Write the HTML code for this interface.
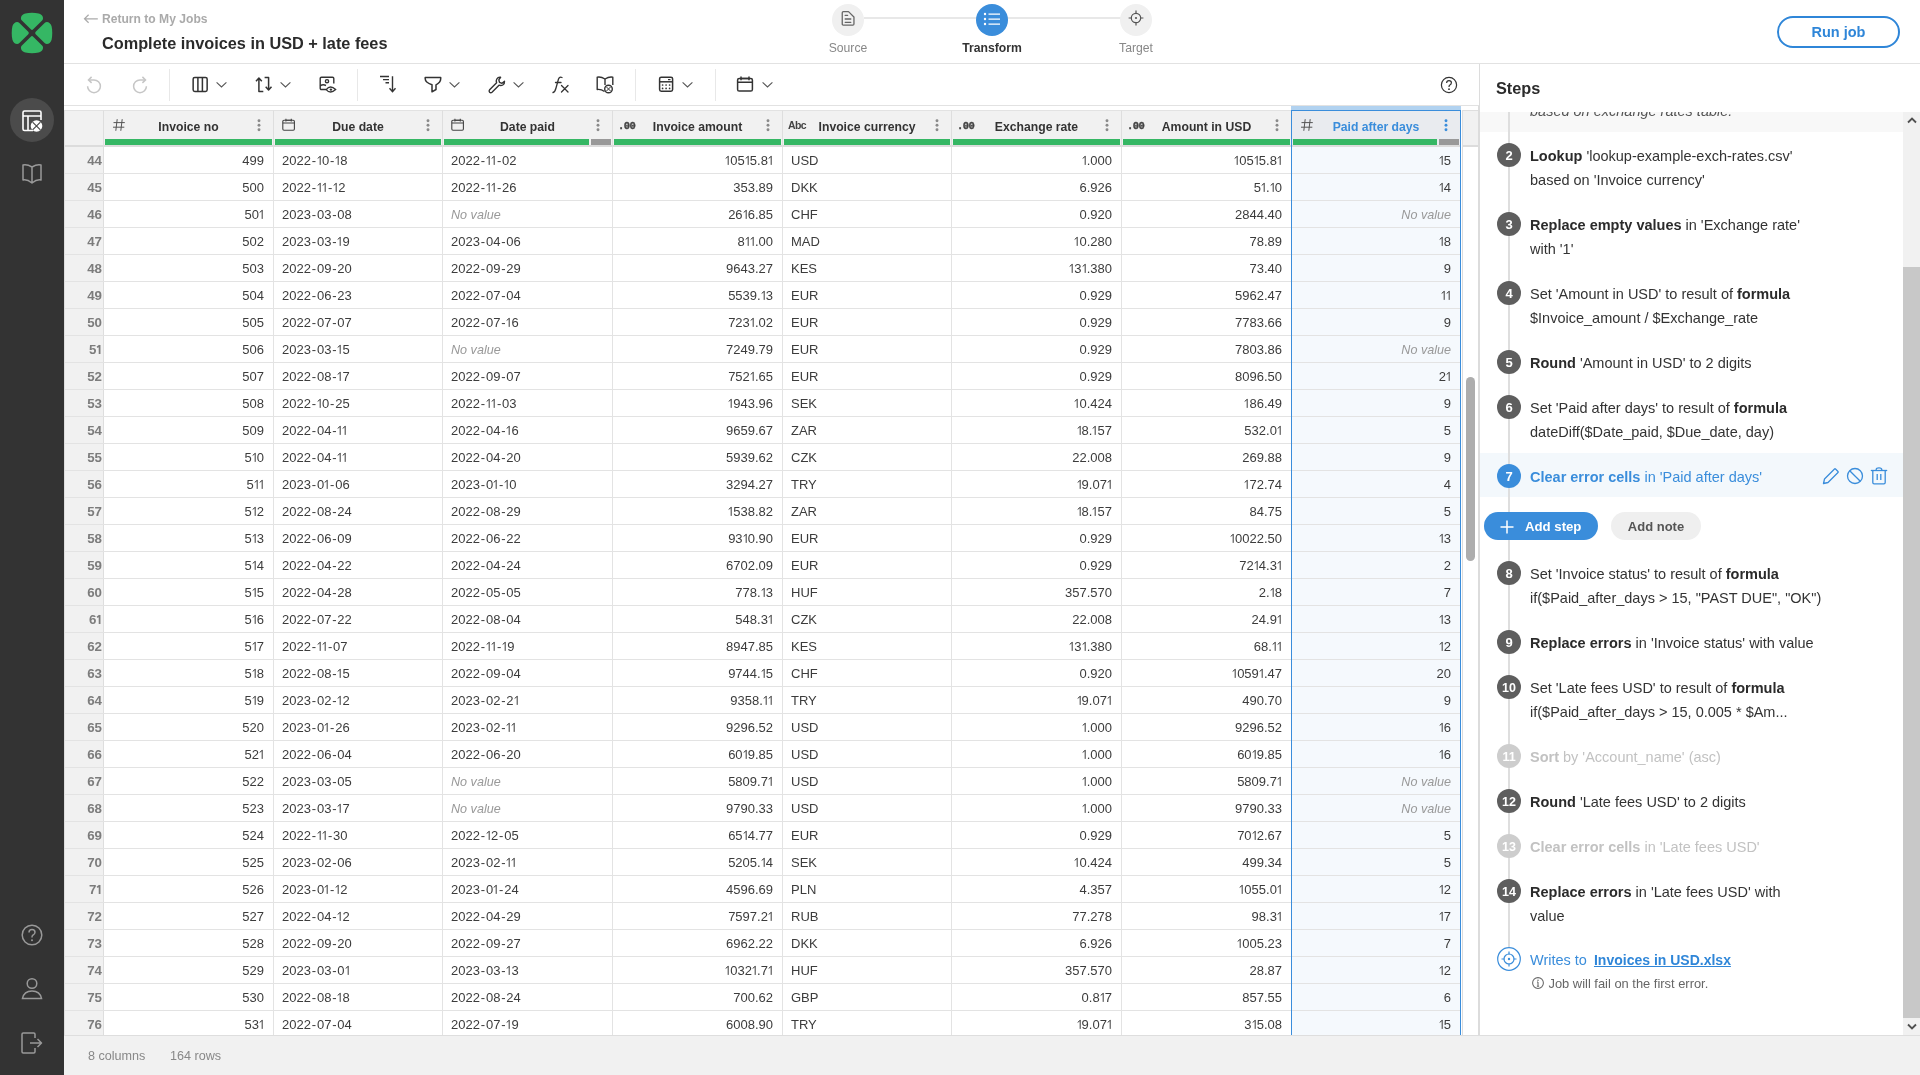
<!DOCTYPE html><html><head><meta charset="utf-8"><style>
*{box-sizing:border-box;margin:0;padding:0}
html,body{width:1920px;height:1075px;overflow:hidden;background:#fff}
body{position:relative;font-family:"Liberation Sans",sans-serif;color:#333;-webkit-font-smoothing:antialiased}
#root{position:absolute;left:0;top:0;width:1920px;height:1075px;will-change:transform}
.abs{position:absolute}
svg{display:block;overflow:visible}
#sb{left:0;top:0;width:64px;height:1075px;background:#333333}
#hdr{left:64px;top:0;width:1856px;height:64px;border-bottom:1px solid #e2e2e2;background:#fff}
#tb{left:64px;top:64px;width:1415px;height:42px;border-bottom:1px solid #e2e2e2;background:#fff}
#foot{left:64px;top:1035px;width:1856px;height:40px;background:#f1f1f1;border-top:1px solid #dedede}
#panel{left:1479px;top:64px;width:441px;height:971px;border-left:1px solid #dcdcdc;background:#fff}
.hc{position:absolute;top:110px;height:37px;background:#f1f1f1;border-right:1px solid #dedede;border-bottom:2px solid #dcdcdc;border-top:1px solid #e2e2e2}
.ht{position:absolute;top:0;left:0;right:0;height:29px;line-height:33px;text-align:center;font-weight:bold;font-size:12.2px;color:#333}
.hi{position:absolute;left:8px;top:6.8px;width:14px;height:14px}
.hk{position:absolute;right:11px;top:7.5px;width:6px;height:14px}
.gbar{position:absolute;top:28px;height:6px;background:#35b764}
.gray{position:absolute;top:28px;height:6px;background:#999}
.row{position:absolute;left:64px;width:1397px;height:27px;border-bottom:1px solid #e3e3e3}
.c{position:absolute;top:0;height:26px;line-height:27px;font-size:13px;color:#3c3c3c;white-space:nowrap;border-right:1px solid #e3e3e3;overflow:hidden}
.r{text-align:right;padding-right:9px}
.l{text-align:left;padding-left:8px}
.rn{position:absolute;left:0;top:0;width:40px;height:26px;line-height:27px;background:#f1f1f1;border-right:1px solid #dedede;text-align:right;padding-right:1px;font-weight:bold;color:#7c7c7c;font-size:13.3px}
.nv{font-style:italic;color:#999;font-size:12.6px}
i.o{font-style:normal;margin-left:-1px;letter-spacing:-1.1px}
i.oe{font-style:normal;margin-left:-2.1px}
svg.one{display:inline-block;vertical-align:baseline}
i.h{font-style:normal;margin-left:0.8px;letter-spacing:0.85px}
.tdec{display:block;-webkit-text-stroke:0.35px #444;font-family:"Liberation Mono",monospace;font-weight:bold;font-size:10.5px;line-height:14px;color:#444;letter-spacing:-0.6px;margin-left:-3px;margin-top:1.2px}
.st{font-size:14.5px;line-height:24px;white-space:nowrap;color:#333}
.st b{font-weight:bold}
.circ{width:24px;height:24px;border-radius:50%;color:#fff;font-weight:bold;text-align:center;line-height:24px}
.tabc{display:block;font-weight:bold;font-size:10.5px;line-height:14px;color:#444;letter-spacing:-0.6px;margin-top:0.7px;margin-left:-3px}
</style></head><body><div id="root">

<div id="sb" class="abs"></div>
<div class="abs" style="left:0px;top:0px;width:64px;height:64px;"><svg width="64" height="64" viewBox="0 0 64 64" ><g fill="#35b764"><path d="M30.8 29.3 L21.9 20.4 C19.8 18.3 21.3 14.4 25.3 13.4 C29.5 12.5 34.5 12.5 38.7 13.4 C42.7 14.4 44.2 18.3 42.1 20.4 L33.2 29.3 Q32 30.5 30.8 29.3 Z"/><g transform="rotate(90 32 33)"><path d="M30.8 29.3 L21.9 20.4 C19.8 18.3 21.3 14.4 25.3 13.4 C29.5 12.5 34.5 12.5 38.7 13.4 C42.7 14.4 44.2 18.3 42.1 20.4 L33.2 29.3 Q32 30.5 30.8 29.3 Z"/></g><g transform="rotate(180 32 33)"><path d="M30.8 29.3 L21.9 20.4 C19.8 18.3 21.3 14.4 25.3 13.4 C29.5 12.5 34.5 12.5 38.7 13.4 C42.7 14.4 44.2 18.3 42.1 20.4 L33.2 29.3 Q32 30.5 30.8 29.3 Z"/></g><g transform="rotate(270 32 33)"><path d="M30.8 29.3 L21.9 20.4 C19.8 18.3 21.3 14.4 25.3 13.4 C29.5 12.5 34.5 12.5 38.7 13.4 C42.7 14.4 44.2 18.3 42.1 20.4 L33.2 29.3 Q32 30.5 30.8 29.3 Z"/></g></g></svg></div>
<div class="abs" style="left:10px;top:98px;width:44px;height:44px;background:#4b4b4b;border-radius:50%"></div>
<div class="abs" style="left:22px;top:110px;width:20px;height:22px;"><svg width="20" height="22" viewBox="0 0 20 22" ><g stroke="#fff" stroke-width="1.6" fill="none"><path d="M11 20.5 H2.5 Q1 20.5 1 19 V2.5 Q1 1 2.5 1 H17.5 Q19 1 19 2.5 V10"/><path d="M1 6 H19 M6 6 V20.5"/></g>
<circle cx="14.5" cy="16" r="5.8" fill="#fff"/><g stroke="#4b4b4b" stroke-width="1.2"><path d="M10.6 12.1 L18.4 19.9 M18.4 12.1 L10.6 19.9"/></g></svg></div>
<div class="abs" style="left:22px;top:163px;width:20px;height:22px;"><svg width="20" height="22" viewBox="0 0 20 22" ><g stroke="#999" stroke-width="1.5" fill="none" stroke-linejoin="round"><path d="M10 4 Q5 1 1 2 V17 Q5 16 10 20 Q15 16 19 17 V2 Q15 1 10 4 Z M10 4 V20"/></g></svg></div>
<div class="abs" style="left:21px;top:924px;width:22px;height:22px;"><svg width="22" height="22" viewBox="0 0 22 22" ><g stroke="#999" stroke-width="1.5" fill="none"><circle cx="11" cy="11" r="9.8"/><path d="M8 8.5 Q8 5.5 11 5.5 Q14 5.5 14 8.3 Q14 10.3 11.5 11.5 Q11 12 11 13.5"/></g><circle cx="11" cy="16.3" r="1" fill="#999"/></svg></div>
<div class="abs" style="left:21px;top:978px;width:22px;height:22px;"><svg width="22" height="22" viewBox="0 0 22 22" ><g stroke="#999" stroke-width="1.5" fill="none"><circle cx="11" cy="5.5" r="4.8"/><path d="M1.5 20.5 Q3 13 11 13 Q19 13 20.5 20.5 Z"/></g></svg></div>
<div class="abs" style="left:21px;top:1032px;width:22px;height:22px;"><svg width="22" height="22" viewBox="0 0 22 22" ><g stroke="#999" stroke-width="1.5" fill="none" stroke-linejoin="round"><path d="M14 6 V2.2 Q14 1 12.8 1 H2.2 Q1 1 1 2.2 V19.8 Q1 21 2.2 21 H12.8 Q14 21 14 19.8 V16"/><path d="M9 11 H20.5 M16.5 7 L20.5 11 L16.5 15"/></g></svg></div>
<div id="hdr" class="abs"></div>
<div class="abs" style="left:83px;top:13px;width:16px;height:12px;"><svg width="16" height="12" viewBox="0 0 16 12" ><g stroke="#aaa" stroke-width="1.2" fill="none"><path d="M14.8 5.8 H1.5 M5.6 1.8 L1.5 5.8 L5.6 9.8"/></g></svg></div>
<div class="abs" style="left:102px;top:10.7px;font-size:12.1px;font-weight:bold;color:#aaa;line-height:17px;white-space:nowrap">Return to My Jobs</div>
<div class="abs" style="left:102px;top:33px;font-size:16.3px;font-weight:bold;color:#2b2b2b;line-height:20px;white-space:nowrap">Complete invoices in USD + late fees</div>
<div class="abs" style="left:864px;top:17px;width:272px;height:2px;background:#e8e8e8"></div>
<div class="abs" style="left:832px;top:4px;width:32px;height:32px;background:#f0f0f0;border-radius:50%"></div>
<div class="abs" style="left:976px;top:4px;width:32px;height:32px;background:#3a8ddb;border-radius:50%"></div>
<div class="abs" style="left:1120px;top:4px;width:32px;height:32px;background:#f0f0f0;border-radius:50%"></div>
<div class="abs" style="left:840px;top:10px;width:16px;height:18px;"><svg width="16" height="18" viewBox="0 0 16 18" ><g stroke="#666" stroke-width="1.3" fill="none" stroke-linejoin="round" stroke-linecap="round"><path d="M2.25 2.8 Q2.25 1.65 3.4 1.65 H8.5 L13.95 7 V13.9 Q13.95 15.05 12.8 15.05 H3.4 Q2.25 15.05 2.25 13.9 Z"/><path d="M5.2 5.4 H7.6 M5.2 9 H10.8 M5.2 12.3 H10.8"/></g></svg></div>
<div class="abs" style="left:983px;top:11.5px;width:18px;height:14px;"><svg width="18" height="14" viewBox="0 0 18 14" ><g fill="#fff"><circle cx="2" cy="2" r="1.2"/><circle cx="2" cy="7" r="1.2"/><circle cx="2" cy="12" r="1.2"/></g><g stroke="#fff" stroke-width="1.25"><path d="M5.5 2 H17 M5.5 7 H17 M5.5 12 H17"/></g></svg></div>
<div class="abs" style="left:1127px;top:9.4px;width:18px;height:18px;"><svg width="18" height="18" viewBox="0 0 18 18" ><g stroke="#555" stroke-width="1.2" fill="none"><circle cx="9" cy="9" r="4.7"/><path d="M9 1.6 V4.3 M9 13.7 V16.4 M1.6 9 H4.3 M13.7 9 H16.4"/></g><circle cx="9" cy="9" r="1.1" fill="#555"/></svg></div>
<div class="abs" style="left:808px;top:40px;width:80px;text-align:center;font-size:12.2px;color:#888;line-height:16px">Source</div>
<div class="abs" style="left:942px;top:40px;width:100px;text-align:center;font-size:12.2px;font-weight:bold;color:#333;line-height:16px">Transform</div>
<div class="abs" style="left:1096px;top:40px;width:80px;text-align:center;font-size:12.2px;color:#888;line-height:16px">Target</div>
<div class="abs" style="left:1777px;top:16px;width:123px;height:32px;border:2px solid #2f86d8;border-radius:16px;text-align:center;line-height:28px;font-size:14.5px;font-weight:bold;color:#2f86d8">Run job</div>
<div id="tb" class="abs"></div>
<div class="abs" style="left:85px;top:77px;width:18px;height:18px;"><svg width="18" height="18" viewBox="0 0 18 18" ><g stroke="#c6c6c6" stroke-width="1.5" fill="none"><path d="M2.6 9.3 A6.4 6.4 0 1 0 9 2.9 H3.6"/><path d="M6.6 -0.1 L3.5 2.9 L6.6 5.9"/></g></svg></div>
<div class="abs" style="left:130.5px;top:77px;width:18px;height:18px;"><svg width="18" height="18" viewBox="0 0 18 18" ><g transform="translate(18,0) scale(-1,1)" stroke="#c6c6c6" stroke-width="1.5" fill="none"><path d="M2.6 9.3 A6.4 6.4 0 1 0 9 2.9 H3.6"/><path d="M6.6 -0.1 L3.5 2.9 L6.6 5.9"/></g></svg></div>
<div class="abs" style="left:169px;top:69px;width:1px;height:32px;background:#e8e8e8"></div>
<div class="abs" style="left:357px;top:69px;width:1px;height:32px;background:#e8e8e8"></div>
<div class="abs" style="left:635px;top:69px;width:1px;height:32px;background:#e8e8e8"></div>
<div class="abs" style="left:715px;top:69px;width:1px;height:32px;background:#e8e8e8"></div>
<div class="abs" style="left:191px;top:75.5px;width:18px;height:18px;"><svg width="18" height="18" viewBox="0 0 18 18" ><g stroke="#333" stroke-width="1.5" fill="none"><rect x="2.15" y="1.45" width="14" height="14" rx="1.6"/><path d="M6.9 1.45 V15.45 M11.4 1.45 V15.45"/></g></svg></div>
<div class="abs" style="left:216.0px;top:82px;width:11px;height:6px;"><svg width="11" height="6" viewBox="0 0 11 6" ><path d="M0.6 0.4 L5.5 5 L10.4 0.4" stroke="#555" stroke-width="1.1" fill="none"/></svg></div>
<div class="abs" style="left:254.5px;top:75.5px;width:18px;height:18px;"><svg width="18" height="18" viewBox="0 0 18 18" ><g stroke="#333" stroke-width="1.5" fill="none" stroke-linejoin="round"><path d="M8.3 15.45 H3.9 V2.2 M1 5.2 L3.9 2 L6.8 5.2"/><path d="M9.6 1.45 H13.6 V14 M10.7 10.8 L13.6 14 L16.5 10.8"/></g></svg></div>
<div class="abs" style="left:279.5px;top:82px;width:11px;height:6px;"><svg width="11" height="6" viewBox="0 0 11 6" ><path d="M0.6 0.4 L5.5 5 L10.4 0.4" stroke="#555" stroke-width="1.1" fill="none"/></svg></div>
<div class="abs" style="left:318.5px;top:76px;width:18px;height:18px;"><svg width="18" height="18" viewBox="0 0 18 18" ><g stroke="#333" stroke-width="1.4" fill="none"><path d="M7 13.5 H2.5 Q1.2 13.5 1.2 12.2 V2.5 Q1.2 1.2 2.5 1.2 H13.5 Q14.8 1.2 14.8 2.5 V7.5"/><circle cx="8" cy="5.2" r="1.6"/><path d="M1.2 9.8 Q4 8 7 9.5"/><path d="M7.2 13.6 Q11.3 8.5 16.6 13.6 Q11.3 18.5 7.2 13.6 Z"/></g><circle cx="11.9" cy="13.6" r="1.2" fill="#333"/></svg></div>
<div class="abs" style="left:378.5px;top:75.3px;width:18px;height:18px;"><svg width="18" height="18" viewBox="0 0 18 18" ><g stroke="#333" stroke-width="1.4" fill="none"><path d="M1 1.5 H10 M4 4.6 H10 M6.5 7.7 H10"/><path d="M13.5 1.2 V16.5 M10.5 13.3 L13.5 16.6 L16.5 13.3"/></g></svg></div>
<div class="abs" style="left:424px;top:75.5px;width:18px;height:18px;"><svg width="18" height="18" viewBox="0 0 18 18" ><g stroke="#333" stroke-width="1.5" fill="none" stroke-linejoin="round"><path d="M1.2 1.5 H16.7 V2.8 Q16.7 6.5 12 8.8 V13.5 L8 15.8 V8.8 Q1.2 6.5 1.2 2.8 Z"/></g></svg></div>
<div class="abs" style="left:449.0px;top:82px;width:11px;height:6px;"><svg width="11" height="6" viewBox="0 0 11 6" ><path d="M0.6 0.4 L5.5 5 L10.4 0.4" stroke="#555" stroke-width="1.1" fill="none"/></svg></div>
<div class="abs" style="left:487.5px;top:75.5px;width:18px;height:18px;"><svg width="18" height="18" viewBox="0 0 18 18" ><g stroke="#333" stroke-width="1.4" fill="none" stroke-linejoin="round"><path d="M12.6 1.3 Q10 1 8.8 3 Q7.8 4.8 8.6 6.8 L1.6 13.8 Q0.6 15 1.6 16.2 Q2.8 17.2 4 16.2 L11 9.2 Q13 10 14.8 9 Q16.8 7.8 16.5 5.2 L14 7.3 L11.5 6.3 L10.8 3.8 Z"/></g></svg></div>
<div class="abs" style="left:512.5px;top:82px;width:11px;height:6px;"><svg width="11" height="6" viewBox="0 0 11 6" ><path d="M0.6 0.4 L5.5 5 L10.4 0.4" stroke="#555" stroke-width="1.1" fill="none"/></svg></div>
<div class="abs" style="left:551.5px;top:76px;width:18px;height:18px;"><svg width="18" height="18" viewBox="0 0 18 18" ><g stroke="#333" stroke-width="1.3" fill="none" stroke-linecap="round"><path d="M1 16.5 Q3 16 4 12 L6.5 3 Q7.5 0.5 10 1.5"/><path d="M3.5 6.5 H9"/><path d="M9.5 9.5 L16 16 M16 9.5 L9.5 16"/></g></svg></div>
<div class="abs" style="left:596px;top:76px;width:18px;height:18px;"><svg width="18" height="18" viewBox="0 0 18 18" ><g stroke="#333" stroke-width="1.4" fill="none" stroke-linejoin="round"><path d="M9 3 Q5 0.5 1.2 1.2 V13.5 Q5 13 8.5 15.5"/><path d="M9 3 Q13 0.5 16.8 1.2 V9"/><path d="M9 3 V9"/><circle cx="12.5" cy="13" r="3.8"/><path d="M10.5 11 L14.5 15 M14.5 11 L10.5 15" stroke-width="1"/></g></svg></div>
<div class="abs" style="left:657px;top:75.5px;width:18px;height:18px;"><svg width="18" height="18" viewBox="0 0 18 18" ><g stroke="#333" stroke-width="1.5" fill="none"><rect x="2.6" y="1.2" width="13" height="14" rx="1.6"/><path d="M2.6 5.8 H15.6"/></g><g fill="#333"><rect x="11" y="3" width="2.5" height="1.2"/><circle cx="5.6" cy="9" r="0.85"/><circle cx="9.1" cy="9" r="0.85"/><circle cx="12.6" cy="9" r="0.85"/><circle cx="5.6" cy="12.4" r="0.85"/><circle cx="9.1" cy="12.4" r="0.85"/><circle cx="12.6" cy="12.4" r="0.85"/></g></svg></div>
<div class="abs" style="left:682.0px;top:82px;width:11px;height:6px;"><svg width="11" height="6" viewBox="0 0 11 6" ><path d="M0.6 0.4 L5.5 5 L10.4 0.4" stroke="#555" stroke-width="1.1" fill="none"/></svg></div>
<div class="abs" style="left:736px;top:75.5px;width:18px;height:18px;"><svg width="18" height="18" viewBox="0 0 18 18" ><g stroke="#333" stroke-width="1.5" fill="none"><rect x="1.6" y="2.4" width="14.8" height="12.6" rx="1.6"/><path d="M1.6 6.2 H16.4 M5 0.6 V4.2 M13 0.6 V4.2 M5 2.4 H13"/></g></svg></div>
<div class="abs" style="left:761.5px;top:82px;width:11px;height:6px;"><svg width="11" height="6" viewBox="0 0 11 6" ><path d="M0.6 0.4 L5.5 5 L10.4 0.4" stroke="#555" stroke-width="1.1" fill="none"/></svg></div>
<div class="abs" style="left:1440px;top:76px;width:18px;height:18px;"><svg width="18" height="18" viewBox="0 0 18 18" ><g stroke="#333" stroke-width="1.2" fill="none"><circle cx="9" cy="9" r="7.6"/><path d="M6.6 7 Q6.6 4.6 9 4.6 Q11.4 4.6 11.4 6.8 Q11.4 8.3 9.6 9.2 Q9 9.6 9 11"/></g><circle cx="9" cy="13.2" r="0.9" fill="#333"/></svg></div>
<div class="hc" style="left:104px;width:170px;background:#f1f1f1"><div class="hi"><svg width="14" height="14" viewBox="0 0 14 14"><g stroke="#555" stroke-width="1" fill="none"><path d="M5.2 1.2 L3.8 12.8 M10.2 1.2 L8.8 12.8 M1.5 4.6 H12.8 M1 9.2 H12.3"/></g></svg></div><div class="ht" style="color:#333">Invoice no</div><div class="hk"><svg width="6" height="14" viewBox="0 0 6 14"><g fill="#8a8a8a"><circle cx="3" cy="1.8" r="1.45"/><circle cx="3" cy="6.3" r="1.45"/><circle cx="3" cy="10.8" r="1.45"/></g></svg></div><div class="gbar" style="left:1px;width:167px"></div></div>
<div class="hc" style="left:274px;width:169px;background:#f1f1f1"><div class="hi"><svg width="14" height="14" viewBox="0 0 14 14"><g stroke="#444" stroke-width="1.1" fill="none"><rect x="0.8" y="2.3" width="11.6" height="9.9" rx="1.2"/><path d="M0.8 5 H12.4 M3.9 0.8 V3.6 M9.3 0.8 V3.6 M3.9 2.3 H9.3"/></g></svg></div><div class="ht" style="color:#333">Due date</div><div class="hk"><svg width="6" height="14" viewBox="0 0 6 14"><g fill="#8a8a8a"><circle cx="3" cy="1.8" r="1.45"/><circle cx="3" cy="6.3" r="1.45"/><circle cx="3" cy="10.8" r="1.45"/></g></svg></div><div class="gbar" style="left:1px;width:166px"></div></div>
<div class="hc" style="left:443px;width:170px;background:#f1f1f1"><div class="hi"><svg width="14" height="14" viewBox="0 0 14 14"><g stroke="#444" stroke-width="1.1" fill="none"><rect x="0.8" y="2.3" width="11.6" height="9.9" rx="1.2"/><path d="M0.8 5 H12.4 M3.9 0.8 V3.6 M9.3 0.8 V3.6 M3.9 2.3 H9.3"/></g></svg></div><div class="ht" style="color:#333">Date paid</div><div class="hk"><svg width="6" height="14" viewBox="0 0 6 14"><g fill="#8a8a8a"><circle cx="3" cy="1.8" r="1.45"/><circle cx="3" cy="6.3" r="1.45"/><circle cx="3" cy="10.8" r="1.45"/></g></svg></div><div class="gbar" style="left:1px;width:145px"></div><div class="gray" style="left:148px;width:20px"></div></div>
<div class="hc" style="left:613px;width:170px;background:#f1f1f1"><div class="hi"><span class="tdec">.00</span></div><div class="ht" style="color:#333">Invoice amount</div><div class="hk"><svg width="6" height="14" viewBox="0 0 6 14"><g fill="#8a8a8a"><circle cx="3" cy="1.8" r="1.45"/><circle cx="3" cy="6.3" r="1.45"/><circle cx="3" cy="10.8" r="1.45"/></g></svg></div><div class="gbar" style="left:1px;width:167px"></div></div>
<div class="hc" style="left:783px;width:169px;background:#f1f1f1"><div class="hi"><span class="tabc">Abc</span></div><div class="ht" style="color:#333">Invoice currency</div><div class="hk"><svg width="6" height="14" viewBox="0 0 6 14"><g fill="#8a8a8a"><circle cx="3" cy="1.8" r="1.45"/><circle cx="3" cy="6.3" r="1.45"/><circle cx="3" cy="10.8" r="1.45"/></g></svg></div><div class="gbar" style="left:1px;width:166px"></div></div>
<div class="hc" style="left:952px;width:170px;background:#f1f1f1"><div class="hi"><span class="tdec">.00</span></div><div class="ht" style="color:#333">Exchange rate</div><div class="hk"><svg width="6" height="14" viewBox="0 0 6 14"><g fill="#8a8a8a"><circle cx="3" cy="1.8" r="1.45"/><circle cx="3" cy="6.3" r="1.45"/><circle cx="3" cy="10.8" r="1.45"/></g></svg></div><div class="gbar" style="left:1px;width:167px"></div></div>
<div class="hc" style="left:1122px;width:170px;background:#f1f1f1"><div class="hi"><span class="tdec">.00</span></div><div class="ht" style="color:#333">Amount in USD</div><div class="hk"><svg width="6" height="14" viewBox="0 0 6 14"><g fill="#8a8a8a"><circle cx="3" cy="1.8" r="1.45"/><circle cx="3" cy="6.3" r="1.45"/><circle cx="3" cy="10.8" r="1.45"/></g></svg></div><div class="gbar" style="left:1px;width:167px"></div></div>
<div class="hc" style="left:1292px;width:169px;background:#e9ebef"><div class="hi"><svg width="14" height="14" viewBox="0 0 14 14"><g stroke="#555" stroke-width="1" fill="none"><path d="M5.2 1.2 L3.8 12.8 M10.2 1.2 L8.8 12.8 M1.5 4.6 H12.8 M1 9.2 H12.3"/></g></svg></div><div class="ht" style="color:#3a8ddb">Paid after days</div><div class="hk"><svg width="6" height="14" viewBox="0 0 6 14"><g fill="#3a8ddb"><circle cx="3" cy="1.8" r="1.45"/><circle cx="3" cy="6.3" r="1.45"/><circle cx="3" cy="10.8" r="1.45"/></g></svg></div><div class="gbar" style="left:1px;width:144px"></div><div class="gray" style="left:147px;width:20px"></div></div>
<div class="hc" style="left:64px;width:40px;top:110px"></div>
<div class="abs" style="left:64px;top:110px;width:1px;height:925px;background:#dedede;z-index:2"></div>
<div class="abs" style="left:1291px;top:106px;width:170px;height:4px;background:#b1d2f0"></div>
<div class="abs" style="left:1462px;top:110px;width:17px;height:37px;background:#f1f1f1;border:1px solid #dedede;border-bottom:2px solid #dcdcdc"></div>
<div class="abs" style="left:1462px;top:147px;width:1px;height:888px;background:#dcdcdc"></div>
<div class="abs" style="left:1478px;top:106px;width:1px;height:929px;background:#dcdcdc"></div>
<div class="abs" style="left:1466px;top:377px;width:9px;height:184px;border-radius:4.5px;background:#adadad"></div>
<div class="row" style="top:147px"><div class="rn">44</div><div class="c r" style="left:40px;width:170px;">499</div><div class="c l" style="left:210px;width:169px;">2022<i class="h">-</i><svg class="one" width="5.1" height="9.4" viewBox="0 0 5.1 9.4"><path d="M3.2 0.0 V8.9 M3.2 0.4 L0.7000000000000002 2.4" stroke="#3c3c3c" stroke<i class="h">-</i>width="1.2" fill="none"/></svg>0<i class="h">-</i><svg class="one" width="5.1" height="9.4" viewBox="0 0 5.1 9.4"><path d="M3.2 0.0 V8.9 M3.2 0.4 L0.7000000000000002 2.4" stroke="#3c3c3c" stroke<i class="h">-</i>width="1.2" fill="none"/></svg>8</div><div class="c l" style="left:379px;width:170px;">2022<i class="h">-</i><svg class="one" width="5.1" height="9.4" viewBox="0 0 5.1 9.4"><path d="M3.2 0.0 V8.9 M3.2 0.4 L0.7000000000000002 2.4" stroke="#3c3c3c" stroke<i class="h">-</i>width="1.2" fill="none"/></svg><svg class="one" width="5.1" height="9.4" viewBox="0 0 5.1 9.4"><path d="M3.2 0.0 V8.9 M3.2 0.4 L0.7000000000000002 2.4" stroke="#3c3c3c" stroke<i class="h">-</i>width="1.2" fill="none"/></svg><i class="h">-</i>02</div><div class="c r" style="left:549px;width:170px;"><svg class="one" width="5.1" height="9.4" viewBox="0 0 5.1 9.4"><path d="M3.2 0.0 V8.9 M3.2 0.4 L0.7000000000000002 2.4" stroke="#3c3c3c" stroke<i class="h">-</i>width="1.2" fill="none"/></svg>05<svg class="one" width="5.1" height="9.4" viewBox="0 0 5.1 9.4"><path d="M3.2 0.0 V8.9 M3.2 0.4 L0.7000000000000002 2.4" stroke="#3c3c3c" stroke<i class="h">-</i>width="1.2" fill="none"/></svg>5.8<svg class="one" width="5.1" height="9.4" viewBox="0 0 5.1 9.4"><path d="M3.2 0.0 V8.9 M3.2 0.4 L0.7000000000000002 2.4" stroke="#3c3c3c" stroke<i class="h">-</i>width="1.2" fill="none"/></svg></div><div class="c l" style="left:719px;width:169px;">USD</div><div class="c r" style="left:888px;width:170px;"><svg class="one" width="5.1" height="9.4" viewBox="0 0 5.1 9.4"><path d="M3.2 0.0 V8.9 M3.2 0.4 L0.7000000000000002 2.4" stroke="#3c3c3c" stroke<i class="h">-</i>width="1.2" fill="none"/></svg>.000</div><div class="c r" style="left:1058px;width:170px;"><svg class="one" width="5.1" height="9.4" viewBox="0 0 5.1 9.4"><path d="M3.2 0.0 V8.9 M3.2 0.4 L0.7000000000000002 2.4" stroke="#3c3c3c" stroke<i class="h">-</i>width="1.2" fill="none"/></svg>05<svg class="one" width="5.1" height="9.4" viewBox="0 0 5.1 9.4"><path d="M3.2 0.0 V8.9 M3.2 0.4 L0.7000000000000002 2.4" stroke="#3c3c3c" stroke<i class="h">-</i>width="1.2" fill="none"/></svg>5.8<svg class="one" width="5.1" height="9.4" viewBox="0 0 5.1 9.4"><path d="M3.2 0.0 V8.9 M3.2 0.4 L0.7000000000000002 2.4" stroke="#3c3c3c" stroke<i class="h">-</i>width="1.2" fill="none"/></svg></div><div class="c r" style="left:1228px;width:169px;background:#f5f9fd;"><svg class="one" width="5.1" height="9.4" viewBox="0 0 5.1 9.4"><path d="M3.2 0.0 V8.9 M3.2 0.4 L0.7000000000000002 2.4" stroke="#3c3c3c" stroke<i class="h">-</i>width="1.2" fill="none"/></svg>5</div></div>
<div class="row" style="top:174px"><div class="rn">45</div><div class="c r" style="left:40px;width:170px;">500</div><div class="c l" style="left:210px;width:169px;">2022<i class="h">-</i><svg class="one" width="5.1" height="9.4" viewBox="0 0 5.1 9.4"><path d="M3.2 0.0 V8.9 M3.2 0.4 L0.7000000000000002 2.4" stroke="#3c3c3c" stroke<i class="h">-</i>width="1.2" fill="none"/></svg><svg class="one" width="5.1" height="9.4" viewBox="0 0 5.1 9.4"><path d="M3.2 0.0 V8.9 M3.2 0.4 L0.7000000000000002 2.4" stroke="#3c3c3c" stroke<i class="h">-</i>width="1.2" fill="none"/></svg><i class="h">-</i><svg class="one" width="5.1" height="9.4" viewBox="0 0 5.1 9.4"><path d="M3.2 0.0 V8.9 M3.2 0.4 L0.7000000000000002 2.4" stroke="#3c3c3c" stroke<i class="h">-</i>width="1.2" fill="none"/></svg>2</div><div class="c l" style="left:379px;width:170px;">2022<i class="h">-</i><svg class="one" width="5.1" height="9.4" viewBox="0 0 5.1 9.4"><path d="M3.2 0.0 V8.9 M3.2 0.4 L0.7000000000000002 2.4" stroke="#3c3c3c" stroke<i class="h">-</i>width="1.2" fill="none"/></svg><svg class="one" width="5.1" height="9.4" viewBox="0 0 5.1 9.4"><path d="M3.2 0.0 V8.9 M3.2 0.4 L0.7000000000000002 2.4" stroke="#3c3c3c" stroke<i class="h">-</i>width="1.2" fill="none"/></svg><i class="h">-</i>26</div><div class="c r" style="left:549px;width:170px;">353.89</div><div class="c l" style="left:719px;width:169px;">DKK</div><div class="c r" style="left:888px;width:170px;">6.926</div><div class="c r" style="left:1058px;width:170px;">5<svg class="one" width="5.1" height="9.4" viewBox="0 0 5.1 9.4"><path d="M3.2 0.0 V8.9 M3.2 0.4 L0.7000000000000002 2.4" stroke="#3c3c3c" stroke<i class="h">-</i>width="1.2" fill="none"/></svg>.<svg class="one" width="5.1" height="9.4" viewBox="0 0 5.1 9.4"><path d="M3.2 0.0 V8.9 M3.2 0.4 L0.7000000000000002 2.4" stroke="#3c3c3c" stroke<i class="h">-</i>width="1.2" fill="none"/></svg>0</div><div class="c r" style="left:1228px;width:169px;background:#f5f9fd;"><svg class="one" width="5.1" height="9.4" viewBox="0 0 5.1 9.4"><path d="M3.2 0.0 V8.9 M3.2 0.4 L0.7000000000000002 2.4" stroke="#3c3c3c" stroke<i class="h">-</i>width="1.2" fill="none"/></svg>4</div></div>
<div class="row" style="top:201px"><div class="rn">46</div><div class="c r" style="left:40px;width:170px;">50<svg class="one" width="5.1" height="9.4" viewBox="0 0 5.1 9.4"><path d="M3.2 0.0 V8.9 M3.2 0.4 L0.7000000000000002 2.4" stroke="#3c3c3c" stroke<i class="h">-</i>width="1.2" fill="none"/></svg></div><div class="c l" style="left:210px;width:169px;">2023<i class="h">-</i>03<i class="h">-</i>08</div><div class="c l" style="left:379px;width:170px;"><span class="nv">No value</span></div><div class="c r" style="left:549px;width:170px;">26<svg class="one" width="5.1" height="9.4" viewBox="0 0 5.1 9.4"><path d="M3.2 0.0 V8.9 M3.2 0.4 L0.7000000000000002 2.4" stroke="#3c3c3c" stroke<i class="h">-</i>width="1.2" fill="none"/></svg>6.85</div><div class="c l" style="left:719px;width:169px;">CHF</div><div class="c r" style="left:888px;width:170px;">0.920</div><div class="c r" style="left:1058px;width:170px;">2844.40</div><div class="c r" style="left:1228px;width:169px;background:#f5f9fd;"><span class="nv">No value</span></div></div>
<div class="row" style="top:228px"><div class="rn">47</div><div class="c r" style="left:40px;width:170px;">502</div><div class="c l" style="left:210px;width:169px;">2023<i class="h">-</i>03<i class="h">-</i><svg class="one" width="5.1" height="9.4" viewBox="0 0 5.1 9.4"><path d="M3.2 0.0 V8.9 M3.2 0.4 L0.7000000000000002 2.4" stroke="#3c3c3c" stroke<i class="h">-</i>width="1.2" fill="none"/></svg>9</div><div class="c l" style="left:379px;width:170px;">2023<i class="h">-</i>04<i class="h">-</i>06</div><div class="c r" style="left:549px;width:170px;">8<svg class="one" width="5.1" height="9.4" viewBox="0 0 5.1 9.4"><path d="M3.2 0.0 V8.9 M3.2 0.4 L0.7000000000000002 2.4" stroke="#3c3c3c" stroke<i class="h">-</i>width="1.2" fill="none"/></svg><svg class="one" width="5.1" height="9.4" viewBox="0 0 5.1 9.4"><path d="M3.2 0.0 V8.9 M3.2 0.4 L0.7000000000000002 2.4" stroke="#3c3c3c" stroke<i class="h">-</i>width="1.2" fill="none"/></svg>.00</div><div class="c l" style="left:719px;width:169px;">MAD</div><div class="c r" style="left:888px;width:170px;"><svg class="one" width="5.1" height="9.4" viewBox="0 0 5.1 9.4"><path d="M3.2 0.0 V8.9 M3.2 0.4 L0.7000000000000002 2.4" stroke="#3c3c3c" stroke<i class="h">-</i>width="1.2" fill="none"/></svg>0.280</div><div class="c r" style="left:1058px;width:170px;">78.89</div><div class="c r" style="left:1228px;width:169px;background:#f5f9fd;"><svg class="one" width="5.1" height="9.4" viewBox="0 0 5.1 9.4"><path d="M3.2 0.0 V8.9 M3.2 0.4 L0.7000000000000002 2.4" stroke="#3c3c3c" stroke<i class="h">-</i>width="1.2" fill="none"/></svg>8</div></div>
<div class="row" style="top:255px"><div class="rn">48</div><div class="c r" style="left:40px;width:170px;">503</div><div class="c l" style="left:210px;width:169px;">2022<i class="h">-</i>09<i class="h">-</i>20</div><div class="c l" style="left:379px;width:170px;">2022<i class="h">-</i>09<i class="h">-</i>29</div><div class="c r" style="left:549px;width:170px;">9643.27</div><div class="c l" style="left:719px;width:169px;">KES</div><div class="c r" style="left:888px;width:170px;"><svg class="one" width="5.1" height="9.4" viewBox="0 0 5.1 9.4"><path d="M3.2 0.0 V8.9 M3.2 0.4 L0.7000000000000002 2.4" stroke="#3c3c3c" stroke<i class="h">-</i>width="1.2" fill="none"/></svg>3<svg class="one" width="5.1" height="9.4" viewBox="0 0 5.1 9.4"><path d="M3.2 0.0 V8.9 M3.2 0.4 L0.7000000000000002 2.4" stroke="#3c3c3c" stroke<i class="h">-</i>width="1.2" fill="none"/></svg>.380</div><div class="c r" style="left:1058px;width:170px;">73.40</div><div class="c r" style="left:1228px;width:169px;background:#f5f9fd;">9</div></div>
<div class="row" style="top:282px"><div class="rn">49</div><div class="c r" style="left:40px;width:170px;">504</div><div class="c l" style="left:210px;width:169px;">2022<i class="h">-</i>06<i class="h">-</i>23</div><div class="c l" style="left:379px;width:170px;">2022<i class="h">-</i>07<i class="h">-</i>04</div><div class="c r" style="left:549px;width:170px;">5539.<svg class="one" width="5.1" height="9.4" viewBox="0 0 5.1 9.4"><path d="M3.2 0.0 V8.9 M3.2 0.4 L0.7000000000000002 2.4" stroke="#3c3c3c" stroke<i class="h">-</i>width="1.2" fill="none"/></svg>3</div><div class="c l" style="left:719px;width:169px;">EUR</div><div class="c r" style="left:888px;width:170px;">0.929</div><div class="c r" style="left:1058px;width:170px;">5962.47</div><div class="c r" style="left:1228px;width:169px;background:#f5f9fd;"><svg class="one" width="5.1" height="9.4" viewBox="0 0 5.1 9.4"><path d="M3.2 0.0 V8.9 M3.2 0.4 L0.7000000000000002 2.4" stroke="#3c3c3c" stroke<i class="h">-</i>width="1.2" fill="none"/></svg><svg class="one" width="5.1" height="9.4" viewBox="0 0 5.1 9.4"><path d="M3.2 0.0 V8.9 M3.2 0.4 L0.7000000000000002 2.4" stroke="#3c3c3c" stroke<i class="h">-</i>width="1.2" fill="none"/></svg></div></div>
<div class="row" style="top:309px"><div class="rn">50</div><div class="c r" style="left:40px;width:170px;">505</div><div class="c l" style="left:210px;width:169px;">2022<i class="h">-</i>07<i class="h">-</i>07</div><div class="c l" style="left:379px;width:170px;">2022<i class="h">-</i>07<i class="h">-</i><svg class="one" width="5.1" height="9.4" viewBox="0 0 5.1 9.4"><path d="M3.2 0.0 V8.9 M3.2 0.4 L0.7000000000000002 2.4" stroke="#3c3c3c" stroke<i class="h">-</i>width="1.2" fill="none"/></svg>6</div><div class="c r" style="left:549px;width:170px;">723<svg class="one" width="5.1" height="9.4" viewBox="0 0 5.1 9.4"><path d="M3.2 0.0 V8.9 M3.2 0.4 L0.7000000000000002 2.4" stroke="#3c3c3c" stroke<i class="h">-</i>width="1.2" fill="none"/></svg>.02</div><div class="c l" style="left:719px;width:169px;">EUR</div><div class="c r" style="left:888px;width:170px;">0.929</div><div class="c r" style="left:1058px;width:170px;">7783.66</div><div class="c r" style="left:1228px;width:169px;background:#f5f9fd;">9</div></div>
<div class="row" style="top:336px"><div class="rn">5<svg class="one" width="5.6" height="9.4" viewBox="0 0 5.6 9.4"><path d="M3.6 0.0 V8.9 M3.6 0.4 L1.1 2.4" stroke="#7c7c7c" stroke-width="1.75" fill="none"/></svg></div><div class="c r" style="left:40px;width:170px;">506</div><div class="c l" style="left:210px;width:169px;">2023<i class="h">-</i>03<i class="h">-</i><svg class="one" width="5.1" height="9.4" viewBox="0 0 5.1 9.4"><path d="M3.2 0.0 V8.9 M3.2 0.4 L0.7000000000000002 2.4" stroke="#3c3c3c" stroke<i class="h">-</i>width="1.2" fill="none"/></svg>5</div><div class="c l" style="left:379px;width:170px;"><span class="nv">No value</span></div><div class="c r" style="left:549px;width:170px;">7249.79</div><div class="c l" style="left:719px;width:169px;">EUR</div><div class="c r" style="left:888px;width:170px;">0.929</div><div class="c r" style="left:1058px;width:170px;">7803.86</div><div class="c r" style="left:1228px;width:169px;background:#f5f9fd;"><span class="nv">No value</span></div></div>
<div class="row" style="top:363px"><div class="rn">52</div><div class="c r" style="left:40px;width:170px;">507</div><div class="c l" style="left:210px;width:169px;">2022<i class="h">-</i>08<i class="h">-</i><svg class="one" width="5.1" height="9.4" viewBox="0 0 5.1 9.4"><path d="M3.2 0.0 V8.9 M3.2 0.4 L0.7000000000000002 2.4" stroke="#3c3c3c" stroke<i class="h">-</i>width="1.2" fill="none"/></svg>7</div><div class="c l" style="left:379px;width:170px;">2022<i class="h">-</i>09<i class="h">-</i>07</div><div class="c r" style="left:549px;width:170px;">752<svg class="one" width="5.1" height="9.4" viewBox="0 0 5.1 9.4"><path d="M3.2 0.0 V8.9 M3.2 0.4 L0.7000000000000002 2.4" stroke="#3c3c3c" stroke<i class="h">-</i>width="1.2" fill="none"/></svg>.65</div><div class="c l" style="left:719px;width:169px;">EUR</div><div class="c r" style="left:888px;width:170px;">0.929</div><div class="c r" style="left:1058px;width:170px;">8096.50</div><div class="c r" style="left:1228px;width:169px;background:#f5f9fd;">2<svg class="one" width="5.1" height="9.4" viewBox="0 0 5.1 9.4"><path d="M3.2 0.0 V8.9 M3.2 0.4 L0.7000000000000002 2.4" stroke="#3c3c3c" stroke<i class="h">-</i>width="1.2" fill="none"/></svg></div></div>
<div class="row" style="top:390px"><div class="rn">53</div><div class="c r" style="left:40px;width:170px;">508</div><div class="c l" style="left:210px;width:169px;">2022<i class="h">-</i><svg class="one" width="5.1" height="9.4" viewBox="0 0 5.1 9.4"><path d="M3.2 0.0 V8.9 M3.2 0.4 L0.7000000000000002 2.4" stroke="#3c3c3c" stroke<i class="h">-</i>width="1.2" fill="none"/></svg>0<i class="h">-</i>25</div><div class="c l" style="left:379px;width:170px;">2022<i class="h">-</i><svg class="one" width="5.1" height="9.4" viewBox="0 0 5.1 9.4"><path d="M3.2 0.0 V8.9 M3.2 0.4 L0.7000000000000002 2.4" stroke="#3c3c3c" stroke<i class="h">-</i>width="1.2" fill="none"/></svg><svg class="one" width="5.1" height="9.4" viewBox="0 0 5.1 9.4"><path d="M3.2 0.0 V8.9 M3.2 0.4 L0.7000000000000002 2.4" stroke="#3c3c3c" stroke<i class="h">-</i>width="1.2" fill="none"/></svg><i class="h">-</i>03</div><div class="c r" style="left:549px;width:170px;"><svg class="one" width="5.1" height="9.4" viewBox="0 0 5.1 9.4"><path d="M3.2 0.0 V8.9 M3.2 0.4 L0.7000000000000002 2.4" stroke="#3c3c3c" stroke<i class="h">-</i>width="1.2" fill="none"/></svg>943.96</div><div class="c l" style="left:719px;width:169px;">SEK</div><div class="c r" style="left:888px;width:170px;"><svg class="one" width="5.1" height="9.4" viewBox="0 0 5.1 9.4"><path d="M3.2 0.0 V8.9 M3.2 0.4 L0.7000000000000002 2.4" stroke="#3c3c3c" stroke<i class="h">-</i>width="1.2" fill="none"/></svg>0.424</div><div class="c r" style="left:1058px;width:170px;"><svg class="one" width="5.1" height="9.4" viewBox="0 0 5.1 9.4"><path d="M3.2 0.0 V8.9 M3.2 0.4 L0.7000000000000002 2.4" stroke="#3c3c3c" stroke<i class="h">-</i>width="1.2" fill="none"/></svg>86.49</div><div class="c r" style="left:1228px;width:169px;background:#f5f9fd;">9</div></div>
<div class="row" style="top:417px"><div class="rn">54</div><div class="c r" style="left:40px;width:170px;">509</div><div class="c l" style="left:210px;width:169px;">2022<i class="h">-</i>04<i class="h">-</i><svg class="one" width="5.1" height="9.4" viewBox="0 0 5.1 9.4"><path d="M3.2 0.0 V8.9 M3.2 0.4 L0.7000000000000002 2.4" stroke="#3c3c3c" stroke<i class="h">-</i>width="1.2" fill="none"/></svg><svg class="one" width="5.1" height="9.4" viewBox="0 0 5.1 9.4"><path d="M3.2 0.0 V8.9 M3.2 0.4 L0.7000000000000002 2.4" stroke="#3c3c3c" stroke<i class="h">-</i>width="1.2" fill="none"/></svg></div><div class="c l" style="left:379px;width:170px;">2022<i class="h">-</i>04<i class="h">-</i><svg class="one" width="5.1" height="9.4" viewBox="0 0 5.1 9.4"><path d="M3.2 0.0 V8.9 M3.2 0.4 L0.7000000000000002 2.4" stroke="#3c3c3c" stroke<i class="h">-</i>width="1.2" fill="none"/></svg>6</div><div class="c r" style="left:549px;width:170px;">9659.67</div><div class="c l" style="left:719px;width:169px;">ZAR</div><div class="c r" style="left:888px;width:170px;"><svg class="one" width="5.1" height="9.4" viewBox="0 0 5.1 9.4"><path d="M3.2 0.0 V8.9 M3.2 0.4 L0.7000000000000002 2.4" stroke="#3c3c3c" stroke<i class="h">-</i>width="1.2" fill="none"/></svg>8.<svg class="one" width="5.1" height="9.4" viewBox="0 0 5.1 9.4"><path d="M3.2 0.0 V8.9 M3.2 0.4 L0.7000000000000002 2.4" stroke="#3c3c3c" stroke<i class="h">-</i>width="1.2" fill="none"/></svg>57</div><div class="c r" style="left:1058px;width:170px;">532.0<svg class="one" width="5.1" height="9.4" viewBox="0 0 5.1 9.4"><path d="M3.2 0.0 V8.9 M3.2 0.4 L0.7000000000000002 2.4" stroke="#3c3c3c" stroke<i class="h">-</i>width="1.2" fill="none"/></svg></div><div class="c r" style="left:1228px;width:169px;background:#f5f9fd;">5</div></div>
<div class="row" style="top:444px"><div class="rn">55</div><div class="c r" style="left:40px;width:170px;">5<svg class="one" width="5.1" height="9.4" viewBox="0 0 5.1 9.4"><path d="M3.2 0.0 V8.9 M3.2 0.4 L0.7000000000000002 2.4" stroke="#3c3c3c" stroke<i class="h">-</i>width="1.2" fill="none"/></svg>0</div><div class="c l" style="left:210px;width:169px;">2022<i class="h">-</i>04<i class="h">-</i><svg class="one" width="5.1" height="9.4" viewBox="0 0 5.1 9.4"><path d="M3.2 0.0 V8.9 M3.2 0.4 L0.7000000000000002 2.4" stroke="#3c3c3c" stroke<i class="h">-</i>width="1.2" fill="none"/></svg><svg class="one" width="5.1" height="9.4" viewBox="0 0 5.1 9.4"><path d="M3.2 0.0 V8.9 M3.2 0.4 L0.7000000000000002 2.4" stroke="#3c3c3c" stroke<i class="h">-</i>width="1.2" fill="none"/></svg></div><div class="c l" style="left:379px;width:170px;">2022<i class="h">-</i>04<i class="h">-</i>20</div><div class="c r" style="left:549px;width:170px;">5939.62</div><div class="c l" style="left:719px;width:169px;">CZK</div><div class="c r" style="left:888px;width:170px;">22.008</div><div class="c r" style="left:1058px;width:170px;">269.88</div><div class="c r" style="left:1228px;width:169px;background:#f5f9fd;">9</div></div>
<div class="row" style="top:471px"><div class="rn">56</div><div class="c r" style="left:40px;width:170px;">5<svg class="one" width="5.1" height="9.4" viewBox="0 0 5.1 9.4"><path d="M3.2 0.0 V8.9 M3.2 0.4 L0.7000000000000002 2.4" stroke="#3c3c3c" stroke<i class="h">-</i>width="1.2" fill="none"/></svg><svg class="one" width="5.1" height="9.4" viewBox="0 0 5.1 9.4"><path d="M3.2 0.0 V8.9 M3.2 0.4 L0.7000000000000002 2.4" stroke="#3c3c3c" stroke<i class="h">-</i>width="1.2" fill="none"/></svg></div><div class="c l" style="left:210px;width:169px;">2023<i class="h">-</i>0<svg class="one" width="5.1" height="9.4" viewBox="0 0 5.1 9.4"><path d="M3.2 0.0 V8.9 M3.2 0.4 L0.7000000000000002 2.4" stroke="#3c3c3c" stroke<i class="h">-</i>width="1.2" fill="none"/></svg><i class="h">-</i>06</div><div class="c l" style="left:379px;width:170px;">2023<i class="h">-</i>0<svg class="one" width="5.1" height="9.4" viewBox="0 0 5.1 9.4"><path d="M3.2 0.0 V8.9 M3.2 0.4 L0.7000000000000002 2.4" stroke="#3c3c3c" stroke<i class="h">-</i>width="1.2" fill="none"/></svg><i class="h">-</i><svg class="one" width="5.1" height="9.4" viewBox="0 0 5.1 9.4"><path d="M3.2 0.0 V8.9 M3.2 0.4 L0.7000000000000002 2.4" stroke="#3c3c3c" stroke<i class="h">-</i>width="1.2" fill="none"/></svg>0</div><div class="c r" style="left:549px;width:170px;">3294.27</div><div class="c l" style="left:719px;width:169px;">TRY</div><div class="c r" style="left:888px;width:170px;"><svg class="one" width="5.1" height="9.4" viewBox="0 0 5.1 9.4"><path d="M3.2 0.0 V8.9 M3.2 0.4 L0.7000000000000002 2.4" stroke="#3c3c3c" stroke<i class="h">-</i>width="1.2" fill="none"/></svg>9.07<svg class="one" width="5.1" height="9.4" viewBox="0 0 5.1 9.4"><path d="M3.2 0.0 V8.9 M3.2 0.4 L0.7000000000000002 2.4" stroke="#3c3c3c" stroke<i class="h">-</i>width="1.2" fill="none"/></svg></div><div class="c r" style="left:1058px;width:170px;"><svg class="one" width="5.1" height="9.4" viewBox="0 0 5.1 9.4"><path d="M3.2 0.0 V8.9 M3.2 0.4 L0.7000000000000002 2.4" stroke="#3c3c3c" stroke<i class="h">-</i>width="1.2" fill="none"/></svg>72.74</div><div class="c r" style="left:1228px;width:169px;background:#f5f9fd;">4</div></div>
<div class="row" style="top:498px"><div class="rn">57</div><div class="c r" style="left:40px;width:170px;">5<svg class="one" width="5.1" height="9.4" viewBox="0 0 5.1 9.4"><path d="M3.2 0.0 V8.9 M3.2 0.4 L0.7000000000000002 2.4" stroke="#3c3c3c" stroke<i class="h">-</i>width="1.2" fill="none"/></svg>2</div><div class="c l" style="left:210px;width:169px;">2022<i class="h">-</i>08<i class="h">-</i>24</div><div class="c l" style="left:379px;width:170px;">2022<i class="h">-</i>08<i class="h">-</i>29</div><div class="c r" style="left:549px;width:170px;"><svg class="one" width="5.1" height="9.4" viewBox="0 0 5.1 9.4"><path d="M3.2 0.0 V8.9 M3.2 0.4 L0.7000000000000002 2.4" stroke="#3c3c3c" stroke<i class="h">-</i>width="1.2" fill="none"/></svg>538.82</div><div class="c l" style="left:719px;width:169px;">ZAR</div><div class="c r" style="left:888px;width:170px;"><svg class="one" width="5.1" height="9.4" viewBox="0 0 5.1 9.4"><path d="M3.2 0.0 V8.9 M3.2 0.4 L0.7000000000000002 2.4" stroke="#3c3c3c" stroke<i class="h">-</i>width="1.2" fill="none"/></svg>8.<svg class="one" width="5.1" height="9.4" viewBox="0 0 5.1 9.4"><path d="M3.2 0.0 V8.9 M3.2 0.4 L0.7000000000000002 2.4" stroke="#3c3c3c" stroke<i class="h">-</i>width="1.2" fill="none"/></svg>57</div><div class="c r" style="left:1058px;width:170px;">84.75</div><div class="c r" style="left:1228px;width:169px;background:#f5f9fd;">5</div></div>
<div class="row" style="top:525px"><div class="rn">58</div><div class="c r" style="left:40px;width:170px;">5<svg class="one" width="5.1" height="9.4" viewBox="0 0 5.1 9.4"><path d="M3.2 0.0 V8.9 M3.2 0.4 L0.7000000000000002 2.4" stroke="#3c3c3c" stroke<i class="h">-</i>width="1.2" fill="none"/></svg>3</div><div class="c l" style="left:210px;width:169px;">2022<i class="h">-</i>06<i class="h">-</i>09</div><div class="c l" style="left:379px;width:170px;">2022<i class="h">-</i>06<i class="h">-</i>22</div><div class="c r" style="left:549px;width:170px;">93<svg class="one" width="5.1" height="9.4" viewBox="0 0 5.1 9.4"><path d="M3.2 0.0 V8.9 M3.2 0.4 L0.7000000000000002 2.4" stroke="#3c3c3c" stroke<i class="h">-</i>width="1.2" fill="none"/></svg>0.90</div><div class="c l" style="left:719px;width:169px;">EUR</div><div class="c r" style="left:888px;width:170px;">0.929</div><div class="c r" style="left:1058px;width:170px;"><svg class="one" width="5.1" height="9.4" viewBox="0 0 5.1 9.4"><path d="M3.2 0.0 V8.9 M3.2 0.4 L0.7000000000000002 2.4" stroke="#3c3c3c" stroke<i class="h">-</i>width="1.2" fill="none"/></svg>0022.50</div><div class="c r" style="left:1228px;width:169px;background:#f5f9fd;"><svg class="one" width="5.1" height="9.4" viewBox="0 0 5.1 9.4"><path d="M3.2 0.0 V8.9 M3.2 0.4 L0.7000000000000002 2.4" stroke="#3c3c3c" stroke<i class="h">-</i>width="1.2" fill="none"/></svg>3</div></div>
<div class="row" style="top:552px"><div class="rn">59</div><div class="c r" style="left:40px;width:170px;">5<svg class="one" width="5.1" height="9.4" viewBox="0 0 5.1 9.4"><path d="M3.2 0.0 V8.9 M3.2 0.4 L0.7000000000000002 2.4" stroke="#3c3c3c" stroke<i class="h">-</i>width="1.2" fill="none"/></svg>4</div><div class="c l" style="left:210px;width:169px;">2022<i class="h">-</i>04<i class="h">-</i>22</div><div class="c l" style="left:379px;width:170px;">2022<i class="h">-</i>04<i class="h">-</i>24</div><div class="c r" style="left:549px;width:170px;">6702.09</div><div class="c l" style="left:719px;width:169px;">EUR</div><div class="c r" style="left:888px;width:170px;">0.929</div><div class="c r" style="left:1058px;width:170px;">72<svg class="one" width="5.1" height="9.4" viewBox="0 0 5.1 9.4"><path d="M3.2 0.0 V8.9 M3.2 0.4 L0.7000000000000002 2.4" stroke="#3c3c3c" stroke<i class="h">-</i>width="1.2" fill="none"/></svg>4.3<svg class="one" width="5.1" height="9.4" viewBox="0 0 5.1 9.4"><path d="M3.2 0.0 V8.9 M3.2 0.4 L0.7000000000000002 2.4" stroke="#3c3c3c" stroke<i class="h">-</i>width="1.2" fill="none"/></svg></div><div class="c r" style="left:1228px;width:169px;background:#f5f9fd;">2</div></div>
<div class="row" style="top:579px"><div class="rn">60</div><div class="c r" style="left:40px;width:170px;">5<svg class="one" width="5.1" height="9.4" viewBox="0 0 5.1 9.4"><path d="M3.2 0.0 V8.9 M3.2 0.4 L0.7000000000000002 2.4" stroke="#3c3c3c" stroke<i class="h">-</i>width="1.2" fill="none"/></svg>5</div><div class="c l" style="left:210px;width:169px;">2022<i class="h">-</i>04<i class="h">-</i>28</div><div class="c l" style="left:379px;width:170px;">2022<i class="h">-</i>05<i class="h">-</i>05</div><div class="c r" style="left:549px;width:170px;">778.<svg class="one" width="5.1" height="9.4" viewBox="0 0 5.1 9.4"><path d="M3.2 0.0 V8.9 M3.2 0.4 L0.7000000000000002 2.4" stroke="#3c3c3c" stroke<i class="h">-</i>width="1.2" fill="none"/></svg>3</div><div class="c l" style="left:719px;width:169px;">HUF</div><div class="c r" style="left:888px;width:170px;">357.570</div><div class="c r" style="left:1058px;width:170px;">2.<svg class="one" width="5.1" height="9.4" viewBox="0 0 5.1 9.4"><path d="M3.2 0.0 V8.9 M3.2 0.4 L0.7000000000000002 2.4" stroke="#3c3c3c" stroke<i class="h">-</i>width="1.2" fill="none"/></svg>8</div><div class="c r" style="left:1228px;width:169px;background:#f5f9fd;">7</div></div>
<div class="row" style="top:606px"><div class="rn">6<svg class="one" width="5.6" height="9.4" viewBox="0 0 5.6 9.4"><path d="M3.6 0.0 V8.9 M3.6 0.4 L1.1 2.4" stroke="#7c7c7c" stroke-width="1.75" fill="none"/></svg></div><div class="c r" style="left:40px;width:170px;">5<svg class="one" width="5.1" height="9.4" viewBox="0 0 5.1 9.4"><path d="M3.2 0.0 V8.9 M3.2 0.4 L0.7000000000000002 2.4" stroke="#3c3c3c" stroke<i class="h">-</i>width="1.2" fill="none"/></svg>6</div><div class="c l" style="left:210px;width:169px;">2022<i class="h">-</i>07<i class="h">-</i>22</div><div class="c l" style="left:379px;width:170px;">2022<i class="h">-</i>08<i class="h">-</i>04</div><div class="c r" style="left:549px;width:170px;">548.3<svg class="one" width="5.1" height="9.4" viewBox="0 0 5.1 9.4"><path d="M3.2 0.0 V8.9 M3.2 0.4 L0.7000000000000002 2.4" stroke="#3c3c3c" stroke<i class="h">-</i>width="1.2" fill="none"/></svg></div><div class="c l" style="left:719px;width:169px;">CZK</div><div class="c r" style="left:888px;width:170px;">22.008</div><div class="c r" style="left:1058px;width:170px;">24.9<svg class="one" width="5.1" height="9.4" viewBox="0 0 5.1 9.4"><path d="M3.2 0.0 V8.9 M3.2 0.4 L0.7000000000000002 2.4" stroke="#3c3c3c" stroke<i class="h">-</i>width="1.2" fill="none"/></svg></div><div class="c r" style="left:1228px;width:169px;background:#f5f9fd;"><svg class="one" width="5.1" height="9.4" viewBox="0 0 5.1 9.4"><path d="M3.2 0.0 V8.9 M3.2 0.4 L0.7000000000000002 2.4" stroke="#3c3c3c" stroke<i class="h">-</i>width="1.2" fill="none"/></svg>3</div></div>
<div class="row" style="top:633px"><div class="rn">62</div><div class="c r" style="left:40px;width:170px;">5<svg class="one" width="5.1" height="9.4" viewBox="0 0 5.1 9.4"><path d="M3.2 0.0 V8.9 M3.2 0.4 L0.7000000000000002 2.4" stroke="#3c3c3c" stroke<i class="h">-</i>width="1.2" fill="none"/></svg>7</div><div class="c l" style="left:210px;width:169px;">2022<i class="h">-</i><svg class="one" width="5.1" height="9.4" viewBox="0 0 5.1 9.4"><path d="M3.2 0.0 V8.9 M3.2 0.4 L0.7000000000000002 2.4" stroke="#3c3c3c" stroke<i class="h">-</i>width="1.2" fill="none"/></svg><svg class="one" width="5.1" height="9.4" viewBox="0 0 5.1 9.4"><path d="M3.2 0.0 V8.9 M3.2 0.4 L0.7000000000000002 2.4" stroke="#3c3c3c" stroke<i class="h">-</i>width="1.2" fill="none"/></svg><i class="h">-</i>07</div><div class="c l" style="left:379px;width:170px;">2022<i class="h">-</i><svg class="one" width="5.1" height="9.4" viewBox="0 0 5.1 9.4"><path d="M3.2 0.0 V8.9 M3.2 0.4 L0.7000000000000002 2.4" stroke="#3c3c3c" stroke<i class="h">-</i>width="1.2" fill="none"/></svg><svg class="one" width="5.1" height="9.4" viewBox="0 0 5.1 9.4"><path d="M3.2 0.0 V8.9 M3.2 0.4 L0.7000000000000002 2.4" stroke="#3c3c3c" stroke<i class="h">-</i>width="1.2" fill="none"/></svg><i class="h">-</i><svg class="one" width="5.1" height="9.4" viewBox="0 0 5.1 9.4"><path d="M3.2 0.0 V8.9 M3.2 0.4 L0.7000000000000002 2.4" stroke="#3c3c3c" stroke<i class="h">-</i>width="1.2" fill="none"/></svg>9</div><div class="c r" style="left:549px;width:170px;">8947.85</div><div class="c l" style="left:719px;width:169px;">KES</div><div class="c r" style="left:888px;width:170px;"><svg class="one" width="5.1" height="9.4" viewBox="0 0 5.1 9.4"><path d="M3.2 0.0 V8.9 M3.2 0.4 L0.7000000000000002 2.4" stroke="#3c3c3c" stroke<i class="h">-</i>width="1.2" fill="none"/></svg>3<svg class="one" width="5.1" height="9.4" viewBox="0 0 5.1 9.4"><path d="M3.2 0.0 V8.9 M3.2 0.4 L0.7000000000000002 2.4" stroke="#3c3c3c" stroke<i class="h">-</i>width="1.2" fill="none"/></svg>.380</div><div class="c r" style="left:1058px;width:170px;">68.<svg class="one" width="5.1" height="9.4" viewBox="0 0 5.1 9.4"><path d="M3.2 0.0 V8.9 M3.2 0.4 L0.7000000000000002 2.4" stroke="#3c3c3c" stroke<i class="h">-</i>width="1.2" fill="none"/></svg><svg class="one" width="5.1" height="9.4" viewBox="0 0 5.1 9.4"><path d="M3.2 0.0 V8.9 M3.2 0.4 L0.7000000000000002 2.4" stroke="#3c3c3c" stroke<i class="h">-</i>width="1.2" fill="none"/></svg></div><div class="c r" style="left:1228px;width:169px;background:#f5f9fd;"><svg class="one" width="5.1" height="9.4" viewBox="0 0 5.1 9.4"><path d="M3.2 0.0 V8.9 M3.2 0.4 L0.7000000000000002 2.4" stroke="#3c3c3c" stroke<i class="h">-</i>width="1.2" fill="none"/></svg>2</div></div>
<div class="row" style="top:660px"><div class="rn">63</div><div class="c r" style="left:40px;width:170px;">5<svg class="one" width="5.1" height="9.4" viewBox="0 0 5.1 9.4"><path d="M3.2 0.0 V8.9 M3.2 0.4 L0.7000000000000002 2.4" stroke="#3c3c3c" stroke<i class="h">-</i>width="1.2" fill="none"/></svg>8</div><div class="c l" style="left:210px;width:169px;">2022<i class="h">-</i>08<i class="h">-</i><svg class="one" width="5.1" height="9.4" viewBox="0 0 5.1 9.4"><path d="M3.2 0.0 V8.9 M3.2 0.4 L0.7000000000000002 2.4" stroke="#3c3c3c" stroke<i class="h">-</i>width="1.2" fill="none"/></svg>5</div><div class="c l" style="left:379px;width:170px;">2022<i class="h">-</i>09<i class="h">-</i>04</div><div class="c r" style="left:549px;width:170px;">9744.<svg class="one" width="5.1" height="9.4" viewBox="0 0 5.1 9.4"><path d="M3.2 0.0 V8.9 M3.2 0.4 L0.7000000000000002 2.4" stroke="#3c3c3c" stroke<i class="h">-</i>width="1.2" fill="none"/></svg>5</div><div class="c l" style="left:719px;width:169px;">CHF</div><div class="c r" style="left:888px;width:170px;">0.920</div><div class="c r" style="left:1058px;width:170px;"><svg class="one" width="5.1" height="9.4" viewBox="0 0 5.1 9.4"><path d="M3.2 0.0 V8.9 M3.2 0.4 L0.7000000000000002 2.4" stroke="#3c3c3c" stroke<i class="h">-</i>width="1.2" fill="none"/></svg>059<svg class="one" width="5.1" height="9.4" viewBox="0 0 5.1 9.4"><path d="M3.2 0.0 V8.9 M3.2 0.4 L0.7000000000000002 2.4" stroke="#3c3c3c" stroke<i class="h">-</i>width="1.2" fill="none"/></svg>.47</div><div class="c r" style="left:1228px;width:169px;background:#f5f9fd;">20</div></div>
<div class="row" style="top:687px"><div class="rn">64</div><div class="c r" style="left:40px;width:170px;">5<svg class="one" width="5.1" height="9.4" viewBox="0 0 5.1 9.4"><path d="M3.2 0.0 V8.9 M3.2 0.4 L0.7000000000000002 2.4" stroke="#3c3c3c" stroke<i class="h">-</i>width="1.2" fill="none"/></svg>9</div><div class="c l" style="left:210px;width:169px;">2023<i class="h">-</i>02<i class="h">-</i><svg class="one" width="5.1" height="9.4" viewBox="0 0 5.1 9.4"><path d="M3.2 0.0 V8.9 M3.2 0.4 L0.7000000000000002 2.4" stroke="#3c3c3c" stroke<i class="h">-</i>width="1.2" fill="none"/></svg>2</div><div class="c l" style="left:379px;width:170px;">2023<i class="h">-</i>02<i class="h">-</i>2<svg class="one" width="5.1" height="9.4" viewBox="0 0 5.1 9.4"><path d="M3.2 0.0 V8.9 M3.2 0.4 L0.7000000000000002 2.4" stroke="#3c3c3c" stroke<i class="h">-</i>width="1.2" fill="none"/></svg></div><div class="c r" style="left:549px;width:170px;">9358.<svg class="one" width="5.1" height="9.4" viewBox="0 0 5.1 9.4"><path d="M3.2 0.0 V8.9 M3.2 0.4 L0.7000000000000002 2.4" stroke="#3c3c3c" stroke<i class="h">-</i>width="1.2" fill="none"/></svg><svg class="one" width="5.1" height="9.4" viewBox="0 0 5.1 9.4"><path d="M3.2 0.0 V8.9 M3.2 0.4 L0.7000000000000002 2.4" stroke="#3c3c3c" stroke<i class="h">-</i>width="1.2" fill="none"/></svg></div><div class="c l" style="left:719px;width:169px;">TRY</div><div class="c r" style="left:888px;width:170px;"><svg class="one" width="5.1" height="9.4" viewBox="0 0 5.1 9.4"><path d="M3.2 0.0 V8.9 M3.2 0.4 L0.7000000000000002 2.4" stroke="#3c3c3c" stroke<i class="h">-</i>width="1.2" fill="none"/></svg>9.07<svg class="one" width="5.1" height="9.4" viewBox="0 0 5.1 9.4"><path d="M3.2 0.0 V8.9 M3.2 0.4 L0.7000000000000002 2.4" stroke="#3c3c3c" stroke<i class="h">-</i>width="1.2" fill="none"/></svg></div><div class="c r" style="left:1058px;width:170px;">490.70</div><div class="c r" style="left:1228px;width:169px;background:#f5f9fd;">9</div></div>
<div class="row" style="top:714px"><div class="rn">65</div><div class="c r" style="left:40px;width:170px;">520</div><div class="c l" style="left:210px;width:169px;">2023<i class="h">-</i>0<svg class="one" width="5.1" height="9.4" viewBox="0 0 5.1 9.4"><path d="M3.2 0.0 V8.9 M3.2 0.4 L0.7000000000000002 2.4" stroke="#3c3c3c" stroke<i class="h">-</i>width="1.2" fill="none"/></svg><i class="h">-</i>26</div><div class="c l" style="left:379px;width:170px;">2023<i class="h">-</i>02<i class="h">-</i><svg class="one" width="5.1" height="9.4" viewBox="0 0 5.1 9.4"><path d="M3.2 0.0 V8.9 M3.2 0.4 L0.7000000000000002 2.4" stroke="#3c3c3c" stroke<i class="h">-</i>width="1.2" fill="none"/></svg><svg class="one" width="5.1" height="9.4" viewBox="0 0 5.1 9.4"><path d="M3.2 0.0 V8.9 M3.2 0.4 L0.7000000000000002 2.4" stroke="#3c3c3c" stroke<i class="h">-</i>width="1.2" fill="none"/></svg></div><div class="c r" style="left:549px;width:170px;">9296.52</div><div class="c l" style="left:719px;width:169px;">USD</div><div class="c r" style="left:888px;width:170px;"><svg class="one" width="5.1" height="9.4" viewBox="0 0 5.1 9.4"><path d="M3.2 0.0 V8.9 M3.2 0.4 L0.7000000000000002 2.4" stroke="#3c3c3c" stroke<i class="h">-</i>width="1.2" fill="none"/></svg>.000</div><div class="c r" style="left:1058px;width:170px;">9296.52</div><div class="c r" style="left:1228px;width:169px;background:#f5f9fd;"><svg class="one" width="5.1" height="9.4" viewBox="0 0 5.1 9.4"><path d="M3.2 0.0 V8.9 M3.2 0.4 L0.7000000000000002 2.4" stroke="#3c3c3c" stroke<i class="h">-</i>width="1.2" fill="none"/></svg>6</div></div>
<div class="row" style="top:741px"><div class="rn">66</div><div class="c r" style="left:40px;width:170px;">52<svg class="one" width="5.1" height="9.4" viewBox="0 0 5.1 9.4"><path d="M3.2 0.0 V8.9 M3.2 0.4 L0.7000000000000002 2.4" stroke="#3c3c3c" stroke<i class="h">-</i>width="1.2" fill="none"/></svg></div><div class="c l" style="left:210px;width:169px;">2022<i class="h">-</i>06<i class="h">-</i>04</div><div class="c l" style="left:379px;width:170px;">2022<i class="h">-</i>06<i class="h">-</i>20</div><div class="c r" style="left:549px;width:170px;">60<svg class="one" width="5.1" height="9.4" viewBox="0 0 5.1 9.4"><path d="M3.2 0.0 V8.9 M3.2 0.4 L0.7000000000000002 2.4" stroke="#3c3c3c" stroke<i class="h">-</i>width="1.2" fill="none"/></svg>9.85</div><div class="c l" style="left:719px;width:169px;">USD</div><div class="c r" style="left:888px;width:170px;"><svg class="one" width="5.1" height="9.4" viewBox="0 0 5.1 9.4"><path d="M3.2 0.0 V8.9 M3.2 0.4 L0.7000000000000002 2.4" stroke="#3c3c3c" stroke<i class="h">-</i>width="1.2" fill="none"/></svg>.000</div><div class="c r" style="left:1058px;width:170px;">60<svg class="one" width="5.1" height="9.4" viewBox="0 0 5.1 9.4"><path d="M3.2 0.0 V8.9 M3.2 0.4 L0.7000000000000002 2.4" stroke="#3c3c3c" stroke<i class="h">-</i>width="1.2" fill="none"/></svg>9.85</div><div class="c r" style="left:1228px;width:169px;background:#f5f9fd;"><svg class="one" width="5.1" height="9.4" viewBox="0 0 5.1 9.4"><path d="M3.2 0.0 V8.9 M3.2 0.4 L0.7000000000000002 2.4" stroke="#3c3c3c" stroke<i class="h">-</i>width="1.2" fill="none"/></svg>6</div></div>
<div class="row" style="top:768px"><div class="rn">67</div><div class="c r" style="left:40px;width:170px;">522</div><div class="c l" style="left:210px;width:169px;">2023<i class="h">-</i>03<i class="h">-</i>05</div><div class="c l" style="left:379px;width:170px;"><span class="nv">No value</span></div><div class="c r" style="left:549px;width:170px;">5809.7<svg class="one" width="5.1" height="9.4" viewBox="0 0 5.1 9.4"><path d="M3.2 0.0 V8.9 M3.2 0.4 L0.7000000000000002 2.4" stroke="#3c3c3c" stroke<i class="h">-</i>width="1.2" fill="none"/></svg></div><div class="c l" style="left:719px;width:169px;">USD</div><div class="c r" style="left:888px;width:170px;"><svg class="one" width="5.1" height="9.4" viewBox="0 0 5.1 9.4"><path d="M3.2 0.0 V8.9 M3.2 0.4 L0.7000000000000002 2.4" stroke="#3c3c3c" stroke<i class="h">-</i>width="1.2" fill="none"/></svg>.000</div><div class="c r" style="left:1058px;width:170px;">5809.7<svg class="one" width="5.1" height="9.4" viewBox="0 0 5.1 9.4"><path d="M3.2 0.0 V8.9 M3.2 0.4 L0.7000000000000002 2.4" stroke="#3c3c3c" stroke<i class="h">-</i>width="1.2" fill="none"/></svg></div><div class="c r" style="left:1228px;width:169px;background:#f5f9fd;"><span class="nv">No value</span></div></div>
<div class="row" style="top:795px"><div class="rn">68</div><div class="c r" style="left:40px;width:170px;">523</div><div class="c l" style="left:210px;width:169px;">2023<i class="h">-</i>03<i class="h">-</i><svg class="one" width="5.1" height="9.4" viewBox="0 0 5.1 9.4"><path d="M3.2 0.0 V8.9 M3.2 0.4 L0.7000000000000002 2.4" stroke="#3c3c3c" stroke<i class="h">-</i>width="1.2" fill="none"/></svg>7</div><div class="c l" style="left:379px;width:170px;"><span class="nv">No value</span></div><div class="c r" style="left:549px;width:170px;">9790.33</div><div class="c l" style="left:719px;width:169px;">USD</div><div class="c r" style="left:888px;width:170px;"><svg class="one" width="5.1" height="9.4" viewBox="0 0 5.1 9.4"><path d="M3.2 0.0 V8.9 M3.2 0.4 L0.7000000000000002 2.4" stroke="#3c3c3c" stroke<i class="h">-</i>width="1.2" fill="none"/></svg>.000</div><div class="c r" style="left:1058px;width:170px;">9790.33</div><div class="c r" style="left:1228px;width:169px;background:#f5f9fd;"><span class="nv">No value</span></div></div>
<div class="row" style="top:822px"><div class="rn">69</div><div class="c r" style="left:40px;width:170px;">524</div><div class="c l" style="left:210px;width:169px;">2022<i class="h">-</i><svg class="one" width="5.1" height="9.4" viewBox="0 0 5.1 9.4"><path d="M3.2 0.0 V8.9 M3.2 0.4 L0.7000000000000002 2.4" stroke="#3c3c3c" stroke<i class="h">-</i>width="1.2" fill="none"/></svg><svg class="one" width="5.1" height="9.4" viewBox="0 0 5.1 9.4"><path d="M3.2 0.0 V8.9 M3.2 0.4 L0.7000000000000002 2.4" stroke="#3c3c3c" stroke<i class="h">-</i>width="1.2" fill="none"/></svg><i class="h">-</i>30</div><div class="c l" style="left:379px;width:170px;">2022<i class="h">-</i><svg class="one" width="5.1" height="9.4" viewBox="0 0 5.1 9.4"><path d="M3.2 0.0 V8.9 M3.2 0.4 L0.7000000000000002 2.4" stroke="#3c3c3c" stroke<i class="h">-</i>width="1.2" fill="none"/></svg>2<i class="h">-</i>05</div><div class="c r" style="left:549px;width:170px;">65<svg class="one" width="5.1" height="9.4" viewBox="0 0 5.1 9.4"><path d="M3.2 0.0 V8.9 M3.2 0.4 L0.7000000000000002 2.4" stroke="#3c3c3c" stroke<i class="h">-</i>width="1.2" fill="none"/></svg>4.77</div><div class="c l" style="left:719px;width:169px;">EUR</div><div class="c r" style="left:888px;width:170px;">0.929</div><div class="c r" style="left:1058px;width:170px;">70<svg class="one" width="5.1" height="9.4" viewBox="0 0 5.1 9.4"><path d="M3.2 0.0 V8.9 M3.2 0.4 L0.7000000000000002 2.4" stroke="#3c3c3c" stroke<i class="h">-</i>width="1.2" fill="none"/></svg>2.67</div><div class="c r" style="left:1228px;width:169px;background:#f5f9fd;">5</div></div>
<div class="row" style="top:849px"><div class="rn">70</div><div class="c r" style="left:40px;width:170px;">525</div><div class="c l" style="left:210px;width:169px;">2023<i class="h">-</i>02<i class="h">-</i>06</div><div class="c l" style="left:379px;width:170px;">2023<i class="h">-</i>02<i class="h">-</i><svg class="one" width="5.1" height="9.4" viewBox="0 0 5.1 9.4"><path d="M3.2 0.0 V8.9 M3.2 0.4 L0.7000000000000002 2.4" stroke="#3c3c3c" stroke<i class="h">-</i>width="1.2" fill="none"/></svg><svg class="one" width="5.1" height="9.4" viewBox="0 0 5.1 9.4"><path d="M3.2 0.0 V8.9 M3.2 0.4 L0.7000000000000002 2.4" stroke="#3c3c3c" stroke<i class="h">-</i>width="1.2" fill="none"/></svg></div><div class="c r" style="left:549px;width:170px;">5205.<svg class="one" width="5.1" height="9.4" viewBox="0 0 5.1 9.4"><path d="M3.2 0.0 V8.9 M3.2 0.4 L0.7000000000000002 2.4" stroke="#3c3c3c" stroke<i class="h">-</i>width="1.2" fill="none"/></svg>4</div><div class="c l" style="left:719px;width:169px;">SEK</div><div class="c r" style="left:888px;width:170px;"><svg class="one" width="5.1" height="9.4" viewBox="0 0 5.1 9.4"><path d="M3.2 0.0 V8.9 M3.2 0.4 L0.7000000000000002 2.4" stroke="#3c3c3c" stroke<i class="h">-</i>width="1.2" fill="none"/></svg>0.424</div><div class="c r" style="left:1058px;width:170px;">499.34</div><div class="c r" style="left:1228px;width:169px;background:#f5f9fd;">5</div></div>
<div class="row" style="top:876px"><div class="rn">7<svg class="one" width="5.6" height="9.4" viewBox="0 0 5.6 9.4"><path d="M3.6 0.0 V8.9 M3.6 0.4 L1.1 2.4" stroke="#7c7c7c" stroke-width="1.75" fill="none"/></svg></div><div class="c r" style="left:40px;width:170px;">526</div><div class="c l" style="left:210px;width:169px;">2023<i class="h">-</i>0<svg class="one" width="5.1" height="9.4" viewBox="0 0 5.1 9.4"><path d="M3.2 0.0 V8.9 M3.2 0.4 L0.7000000000000002 2.4" stroke="#3c3c3c" stroke<i class="h">-</i>width="1.2" fill="none"/></svg><i class="h">-</i><svg class="one" width="5.1" height="9.4" viewBox="0 0 5.1 9.4"><path d="M3.2 0.0 V8.9 M3.2 0.4 L0.7000000000000002 2.4" stroke="#3c3c3c" stroke<i class="h">-</i>width="1.2" fill="none"/></svg>2</div><div class="c l" style="left:379px;width:170px;">2023<i class="h">-</i>0<svg class="one" width="5.1" height="9.4" viewBox="0 0 5.1 9.4"><path d="M3.2 0.0 V8.9 M3.2 0.4 L0.7000000000000002 2.4" stroke="#3c3c3c" stroke<i class="h">-</i>width="1.2" fill="none"/></svg><i class="h">-</i>24</div><div class="c r" style="left:549px;width:170px;">4596.69</div><div class="c l" style="left:719px;width:169px;">PLN</div><div class="c r" style="left:888px;width:170px;">4.357</div><div class="c r" style="left:1058px;width:170px;"><svg class="one" width="5.1" height="9.4" viewBox="0 0 5.1 9.4"><path d="M3.2 0.0 V8.9 M3.2 0.4 L0.7000000000000002 2.4" stroke="#3c3c3c" stroke<i class="h">-</i>width="1.2" fill="none"/></svg>055.0<svg class="one" width="5.1" height="9.4" viewBox="0 0 5.1 9.4"><path d="M3.2 0.0 V8.9 M3.2 0.4 L0.7000000000000002 2.4" stroke="#3c3c3c" stroke<i class="h">-</i>width="1.2" fill="none"/></svg></div><div class="c r" style="left:1228px;width:169px;background:#f5f9fd;"><svg class="one" width="5.1" height="9.4" viewBox="0 0 5.1 9.4"><path d="M3.2 0.0 V8.9 M3.2 0.4 L0.7000000000000002 2.4" stroke="#3c3c3c" stroke<i class="h">-</i>width="1.2" fill="none"/></svg>2</div></div>
<div class="row" style="top:903px"><div class="rn">72</div><div class="c r" style="left:40px;width:170px;">527</div><div class="c l" style="left:210px;width:169px;">2022<i class="h">-</i>04<i class="h">-</i><svg class="one" width="5.1" height="9.4" viewBox="0 0 5.1 9.4"><path d="M3.2 0.0 V8.9 M3.2 0.4 L0.7000000000000002 2.4" stroke="#3c3c3c" stroke<i class="h">-</i>width="1.2" fill="none"/></svg>2</div><div class="c l" style="left:379px;width:170px;">2022<i class="h">-</i>04<i class="h">-</i>29</div><div class="c r" style="left:549px;width:170px;">7597.2<svg class="one" width="5.1" height="9.4" viewBox="0 0 5.1 9.4"><path d="M3.2 0.0 V8.9 M3.2 0.4 L0.7000000000000002 2.4" stroke="#3c3c3c" stroke<i class="h">-</i>width="1.2" fill="none"/></svg></div><div class="c l" style="left:719px;width:169px;">RUB</div><div class="c r" style="left:888px;width:170px;">77.278</div><div class="c r" style="left:1058px;width:170px;">98.3<svg class="one" width="5.1" height="9.4" viewBox="0 0 5.1 9.4"><path d="M3.2 0.0 V8.9 M3.2 0.4 L0.7000000000000002 2.4" stroke="#3c3c3c" stroke<i class="h">-</i>width="1.2" fill="none"/></svg></div><div class="c r" style="left:1228px;width:169px;background:#f5f9fd;"><svg class="one" width="5.1" height="9.4" viewBox="0 0 5.1 9.4"><path d="M3.2 0.0 V8.9 M3.2 0.4 L0.7000000000000002 2.4" stroke="#3c3c3c" stroke<i class="h">-</i>width="1.2" fill="none"/></svg>7</div></div>
<div class="row" style="top:930px"><div class="rn">73</div><div class="c r" style="left:40px;width:170px;">528</div><div class="c l" style="left:210px;width:169px;">2022<i class="h">-</i>09<i class="h">-</i>20</div><div class="c l" style="left:379px;width:170px;">2022<i class="h">-</i>09<i class="h">-</i>27</div><div class="c r" style="left:549px;width:170px;">6962.22</div><div class="c l" style="left:719px;width:169px;">DKK</div><div class="c r" style="left:888px;width:170px;">6.926</div><div class="c r" style="left:1058px;width:170px;"><svg class="one" width="5.1" height="9.4" viewBox="0 0 5.1 9.4"><path d="M3.2 0.0 V8.9 M3.2 0.4 L0.7000000000000002 2.4" stroke="#3c3c3c" stroke<i class="h">-</i>width="1.2" fill="none"/></svg>005.23</div><div class="c r" style="left:1228px;width:169px;background:#f5f9fd;">7</div></div>
<div class="row" style="top:957px"><div class="rn">74</div><div class="c r" style="left:40px;width:170px;">529</div><div class="c l" style="left:210px;width:169px;">2023<i class="h">-</i>03<i class="h">-</i>0<svg class="one" width="5.1" height="9.4" viewBox="0 0 5.1 9.4"><path d="M3.2 0.0 V8.9 M3.2 0.4 L0.7000000000000002 2.4" stroke="#3c3c3c" stroke<i class="h">-</i>width="1.2" fill="none"/></svg></div><div class="c l" style="left:379px;width:170px;">2023<i class="h">-</i>03<i class="h">-</i><svg class="one" width="5.1" height="9.4" viewBox="0 0 5.1 9.4"><path d="M3.2 0.0 V8.9 M3.2 0.4 L0.7000000000000002 2.4" stroke="#3c3c3c" stroke<i class="h">-</i>width="1.2" fill="none"/></svg>3</div><div class="c r" style="left:549px;width:170px;"><svg class="one" width="5.1" height="9.4" viewBox="0 0 5.1 9.4"><path d="M3.2 0.0 V8.9 M3.2 0.4 L0.7000000000000002 2.4" stroke="#3c3c3c" stroke<i class="h">-</i>width="1.2" fill="none"/></svg>032<svg class="one" width="5.1" height="9.4" viewBox="0 0 5.1 9.4"><path d="M3.2 0.0 V8.9 M3.2 0.4 L0.7000000000000002 2.4" stroke="#3c3c3c" stroke<i class="h">-</i>width="1.2" fill="none"/></svg>.7<svg class="one" width="5.1" height="9.4" viewBox="0 0 5.1 9.4"><path d="M3.2 0.0 V8.9 M3.2 0.4 L0.7000000000000002 2.4" stroke="#3c3c3c" stroke<i class="h">-</i>width="1.2" fill="none"/></svg></div><div class="c l" style="left:719px;width:169px;">HUF</div><div class="c r" style="left:888px;width:170px;">357.570</div><div class="c r" style="left:1058px;width:170px;">28.87</div><div class="c r" style="left:1228px;width:169px;background:#f5f9fd;"><svg class="one" width="5.1" height="9.4" viewBox="0 0 5.1 9.4"><path d="M3.2 0.0 V8.9 M3.2 0.4 L0.7000000000000002 2.4" stroke="#3c3c3c" stroke<i class="h">-</i>width="1.2" fill="none"/></svg>2</div></div>
<div class="row" style="top:984px"><div class="rn">75</div><div class="c r" style="left:40px;width:170px;">530</div><div class="c l" style="left:210px;width:169px;">2022<i class="h">-</i>08<i class="h">-</i><svg class="one" width="5.1" height="9.4" viewBox="0 0 5.1 9.4"><path d="M3.2 0.0 V8.9 M3.2 0.4 L0.7000000000000002 2.4" stroke="#3c3c3c" stroke<i class="h">-</i>width="1.2" fill="none"/></svg>8</div><div class="c l" style="left:379px;width:170px;">2022<i class="h">-</i>08<i class="h">-</i>24</div><div class="c r" style="left:549px;width:170px;">700.62</div><div class="c l" style="left:719px;width:169px;">GBP</div><div class="c r" style="left:888px;width:170px;">0.8<svg class="one" width="5.1" height="9.4" viewBox="0 0 5.1 9.4"><path d="M3.2 0.0 V8.9 M3.2 0.4 L0.7000000000000002 2.4" stroke="#3c3c3c" stroke<i class="h">-</i>width="1.2" fill="none"/></svg>7</div><div class="c r" style="left:1058px;width:170px;">857.55</div><div class="c r" style="left:1228px;width:169px;background:#f5f9fd;">6</div></div>
<div class="row" style="top:1011px"><div class="rn">76</div><div class="c r" style="left:40px;width:170px;">53<svg class="one" width="5.1" height="9.4" viewBox="0 0 5.1 9.4"><path d="M3.2 0.0 V8.9 M3.2 0.4 L0.7000000000000002 2.4" stroke="#3c3c3c" stroke<i class="h">-</i>width="1.2" fill="none"/></svg></div><div class="c l" style="left:210px;width:169px;">2022<i class="h">-</i>07<i class="h">-</i>04</div><div class="c l" style="left:379px;width:170px;">2022<i class="h">-</i>07<i class="h">-</i><svg class="one" width="5.1" height="9.4" viewBox="0 0 5.1 9.4"><path d="M3.2 0.0 V8.9 M3.2 0.4 L0.7000000000000002 2.4" stroke="#3c3c3c" stroke<i class="h">-</i>width="1.2" fill="none"/></svg>9</div><div class="c r" style="left:549px;width:170px;">6008.90</div><div class="c l" style="left:719px;width:169px;">TRY</div><div class="c r" style="left:888px;width:170px;"><svg class="one" width="5.1" height="9.4" viewBox="0 0 5.1 9.4"><path d="M3.2 0.0 V8.9 M3.2 0.4 L0.7000000000000002 2.4" stroke="#3c3c3c" stroke<i class="h">-</i>width="1.2" fill="none"/></svg>9.07<svg class="one" width="5.1" height="9.4" viewBox="0 0 5.1 9.4"><path d="M3.2 0.0 V8.9 M3.2 0.4 L0.7000000000000002 2.4" stroke="#3c3c3c" stroke<i class="h">-</i>width="1.2" fill="none"/></svg></div><div class="c r" style="left:1058px;width:170px;">3<svg class="one" width="5.1" height="9.4" viewBox="0 0 5.1 9.4"><path d="M3.2 0.0 V8.9 M3.2 0.4 L0.7000000000000002 2.4" stroke="#3c3c3c" stroke<i class="h">-</i>width="1.2" fill="none"/></svg>5.08</div><div class="c r" style="left:1228px;width:169px;background:#f5f9fd;"><svg class="one" width="5.1" height="9.4" viewBox="0 0 5.1 9.4"><path d="M3.2 0.0 V8.9 M3.2 0.4 L0.7000000000000002 2.4" stroke="#3c3c3c" stroke<i class="h">-</i>width="1.2" fill="none"/></svg>5</div></div>
<div class="abs" style="left:1291px;top:110px;width:170px;height:925px;border:1.5px solid #3a8ddb;border-bottom:none;pointer-events:none"></div>
<div id="panel" class="abs"></div>
<div class="abs" style="left:1496px;top:78px;font-size:16.3px;font-weight:bold;color:#2b2b2b;line-height:20px">Steps</div>
<div class="abs" style="left:1480px;top:112px;width:440px;height:923px;overflow:hidden">
<div class="abs" style="left:0;top:0;width:423px;height:20px;background:#f8f8f8"></div>
<div class="abs st" style="left:50px;top:-13px;font-style:italic;color:#555">based on exchange rates table.</div>
<div class="abs" style="left:0;top:341px;width:423px;height:44px;background:#f3f8fc"></div>
<div class="abs" style="left:28px;top:0;width:2px;height:836px;background:#dedede"></div>
<div class="abs circ" style="left:17px;top:31px;background:#5e5e5e;font-size:13px;line-height:26px">2</div>
<div class="abs st" style="left:50px;top:32px;color:#333"><b style=color:#2b2b2b>Lookup</b> 'lookup-example-exch-rates.csv'<br>based on 'Invoice currency'</div>
<div class="abs circ" style="left:17px;top:100px;background:#5e5e5e;font-size:13px;line-height:26px">3</div>
<div class="abs st" style="left:50px;top:101px;color:#333"><b style=color:#2b2b2b>Replace empty values</b> in 'Exchange rate'<br>with '1'</div>
<div class="abs circ" style="left:17px;top:169px;background:#5e5e5e;font-size:13px;line-height:26px">4</div>
<div class="abs st" style="left:50px;top:170px;color:#333">Set 'Amount in USD' to result of <b style=color:#2b2b2b>formula</b><br>$Invoice_amount / $Exchange_rate</div>
<div class="abs circ" style="left:17px;top:238px;background:#5e5e5e;font-size:13px;line-height:26px">5</div>
<div class="abs st" style="left:50px;top:239px;color:#333"><b style=color:#2b2b2b>Round</b> 'Amount in USD' to 2 digits</div>
<div class="abs circ" style="left:17px;top:283px;background:#5e5e5e;font-size:13px;line-height:26px">6</div>
<div class="abs st" style="left:50px;top:284px;color:#333">Set 'Paid after days' to result of <b style=color:#2b2b2b>formula</b><br>dateDiff($Date_paid, $Due_date, day)</div>
<div class="abs circ" style="left:17px;top:352px;background:#3a8ddb;font-size:13px;line-height:26px">7</div>
<div class="abs st" style="left:50px;top:353px;color:#3a8ddb"><b style=color:#3a8ddb>Clear error cells</b> in 'Paid after days'</div>
<div class="abs circ" style="left:17px;top:449px;background:#5e5e5e;font-size:13px;line-height:26px">8</div>
<div class="abs st" style="left:50px;top:450px;color:#333">Set 'Invoice status' to result of <b style=color:#2b2b2b>formula</b><br>if($Paid_after_days &gt; 15, "PAST DUE", "OK")</div>
<div class="abs circ" style="left:17px;top:518px;background:#5e5e5e;font-size:13px;line-height:26px">9</div>
<div class="abs st" style="left:50px;top:519px;color:#333"><b style=color:#2b2b2b>Replace errors</b> in 'Invoice status' with value</div>
<div class="abs circ" style="left:17px;top:563px;background:#5e5e5e;font-size:12.5px;line-height:26px">10</div>
<div class="abs st" style="left:50px;top:564px;color:#333">Set 'Late fees USD' to result of <b style=color:#2b2b2b>formula</b><br>if($Paid_after_days &gt; 15, 0.005 * $Am...</div>
<div class="abs circ" style="left:17px;top:632px;background:#cdcdcd;font-size:12.5px;line-height:26px">11</div>
<div class="abs st" style="left:50px;top:633px;color:#c2c2c2"><b style=color:#c2c2c2>Sort</b> by 'Account_name' (asc)</div>
<div class="abs circ" style="left:17px;top:677px;background:#5e5e5e;font-size:12.5px;line-height:26px">12</div>
<div class="abs st" style="left:50px;top:678px;color:#333"><b style=color:#2b2b2b>Round</b> 'Late fees USD' to 2 digits</div>
<div class="abs circ" style="left:17px;top:722px;background:#cdcdcd;font-size:12.5px;line-height:26px">13</div>
<div class="abs st" style="left:50px;top:723px;color:#c2c2c2"><b style=color:#c2c2c2>Clear error cells</b> in 'Late fees USD'</div>
<div class="abs circ" style="left:17px;top:767px;background:#5e5e5e;font-size:12.5px;line-height:26px">14</div>
<div class="abs st" style="left:50px;top:768px;color:#333"><b style=color:#2b2b2b>Replace errors</b> in 'Late fees USD' with<br>value</div>
<div class="abs" style="left:342px;top:355px;width:18px;height:18px;"><svg width="18" height="18" viewBox="0 0 18 18" ><g stroke="#3a8ddb" stroke-width="1.3" fill="none" stroke-linejoin="round"><path d="M1.5 16.5 L2.5 12 L12.5 2 Q13 1.5 13.5 2 L16 4.5 Q16.5 5 16 5.5 L6 15.5 Z"/></g></svg></div>
<div class="abs" style="left:366px;top:355px;width:18px;height:18px;"><svg width="18" height="18" viewBox="0 0 18 18" ><g stroke="#3a8ddb" stroke-width="1.3" fill="none"><circle cx="9" cy="9" r="7.5"/><path d="M3.7 3.7 L14.3 14.3"/></g></svg></div>
<div class="abs" style="left:390px;top:355px;width:18px;height:18px;"><svg width="18" height="18" viewBox="0 0 18 18" ><g stroke="#3a8ddb" stroke-width="1.3" fill="none" stroke-linejoin="round"><path d="M0.8 3.5 H17.2"/><path d="M6.2 3.5 V2.8 Q6.2 0.8 9 0.8 Q11.8 0.8 11.8 2.8 V3.5"/><path d="M2.8 3.5 V15.5 Q2.8 16.8 4.1 16.8 H13.9 Q15.2 16.8 15.2 15.5 V3.5"/><path d="M7.2 7 V13 M10.8 7 V13"/></g></svg></div>
<div class="abs" style="left:4px;top:400px;width:114px;height:28px;border-radius:14px;background:#3a8ddb"></div>
<div class="abs" style="left:20px;top:407.5px;width:14px;height:14px;"><svg width="14" height="14" viewBox="0 0 14 14" ><g stroke="#fff" stroke-width="1.5"><path d="M7 0.5 V13.5 M0.5 7 H13.5"/></g></svg></div>
<div class="abs" style="left:45px;top:407px;font-size:13.2px;font-weight:bold;color:#fff;line-height:16px">Add step</div>
<div class="abs" style="left:131px;top:400px;width:90px;height:28px;border-radius:14px;background:#efefef;text-align:center;font-size:13px;font-weight:bold;color:#555;line-height:30px">Add note</div>
<div class="abs" style="left:17px;top:835px;width:24px;height:24px;"><svg width="24" height="24" viewBox="0 0 24 24" ><g stroke="#3a8ddb" stroke-width="1.2" fill="none"><circle cx="12" cy="12" r="11.3"/><circle cx="12" cy="12" r="5"/><path d="M12 4.5 V7.5 M12 16.5 V19.5 M4.5 12 H7.5 M16.5 12 H19.5"/></g><circle cx="12" cy="12" r="1.2" fill="#3a8ddb"/></svg></div>
<div class="abs st" style="left:50px;top:836px;color:#3a8ddb">Writes to <b style="margin-left:3px;color:#2f86d8;text-decoration:underline;font-size:14px">Invoices in USD.xlsx</b></div>
<div class="abs" style="left:52px;top:864.8px;width:12px;height:12px;"><svg width="12" height="12" viewBox="0 0 12 12" ><g stroke="#666" stroke-width="1.05" fill="none"><circle cx="6" cy="6" r="5.4"/><path d="M6 5 V9.2 M4.9 9.2 H7.1 M5 5 H6"/></g><circle cx="6" cy="3.2" r="0.75" fill="#666"/></svg></div>
<div class="abs" style="left:68.5px;top:864px;font-size:12.9px;color:#666;line-height:16px;white-space:nowrap">Job will fail on the first error.</div>
<div class="abs" style="left:423px;top:0;width:17px;height:923px;background:#f1f1f1"></div>
<div class="abs" style="left:423px;top:155px;width:17px;height:751px;background:#c8c8c8"></div>
<div class="abs" style="left:426.5px;top:5px;width:10px;height:6px;"><svg width="10" height="6" viewBox="0 0 10 6" ><path d="M1 5.5 L5 1.5 L9 5.5" stroke="#505050" stroke-width="1.8" fill="none"/></svg></div>
<div class="abs" style="left:426.5px;top:912px;width:10px;height:6px;"><svg width="10" height="6" viewBox="0 0 10 6" ><path d="M1 0.5 L5 4.5 L9 0.5" stroke="#505050" stroke-width="1.8" fill="none"/></svg></div>
</div>
<div id="foot" class="abs"></div>
<div class="abs" style="left:88px;top:1048px;font-size:12.6px;color:#888;line-height:16px;white-space:nowrap">8 columns</div>
<div class="abs" style="left:170px;top:1048px;font-size:12.6px;color:#888;line-height:16px;white-space:nowrap">164 rows</div>
</div></body></html>
